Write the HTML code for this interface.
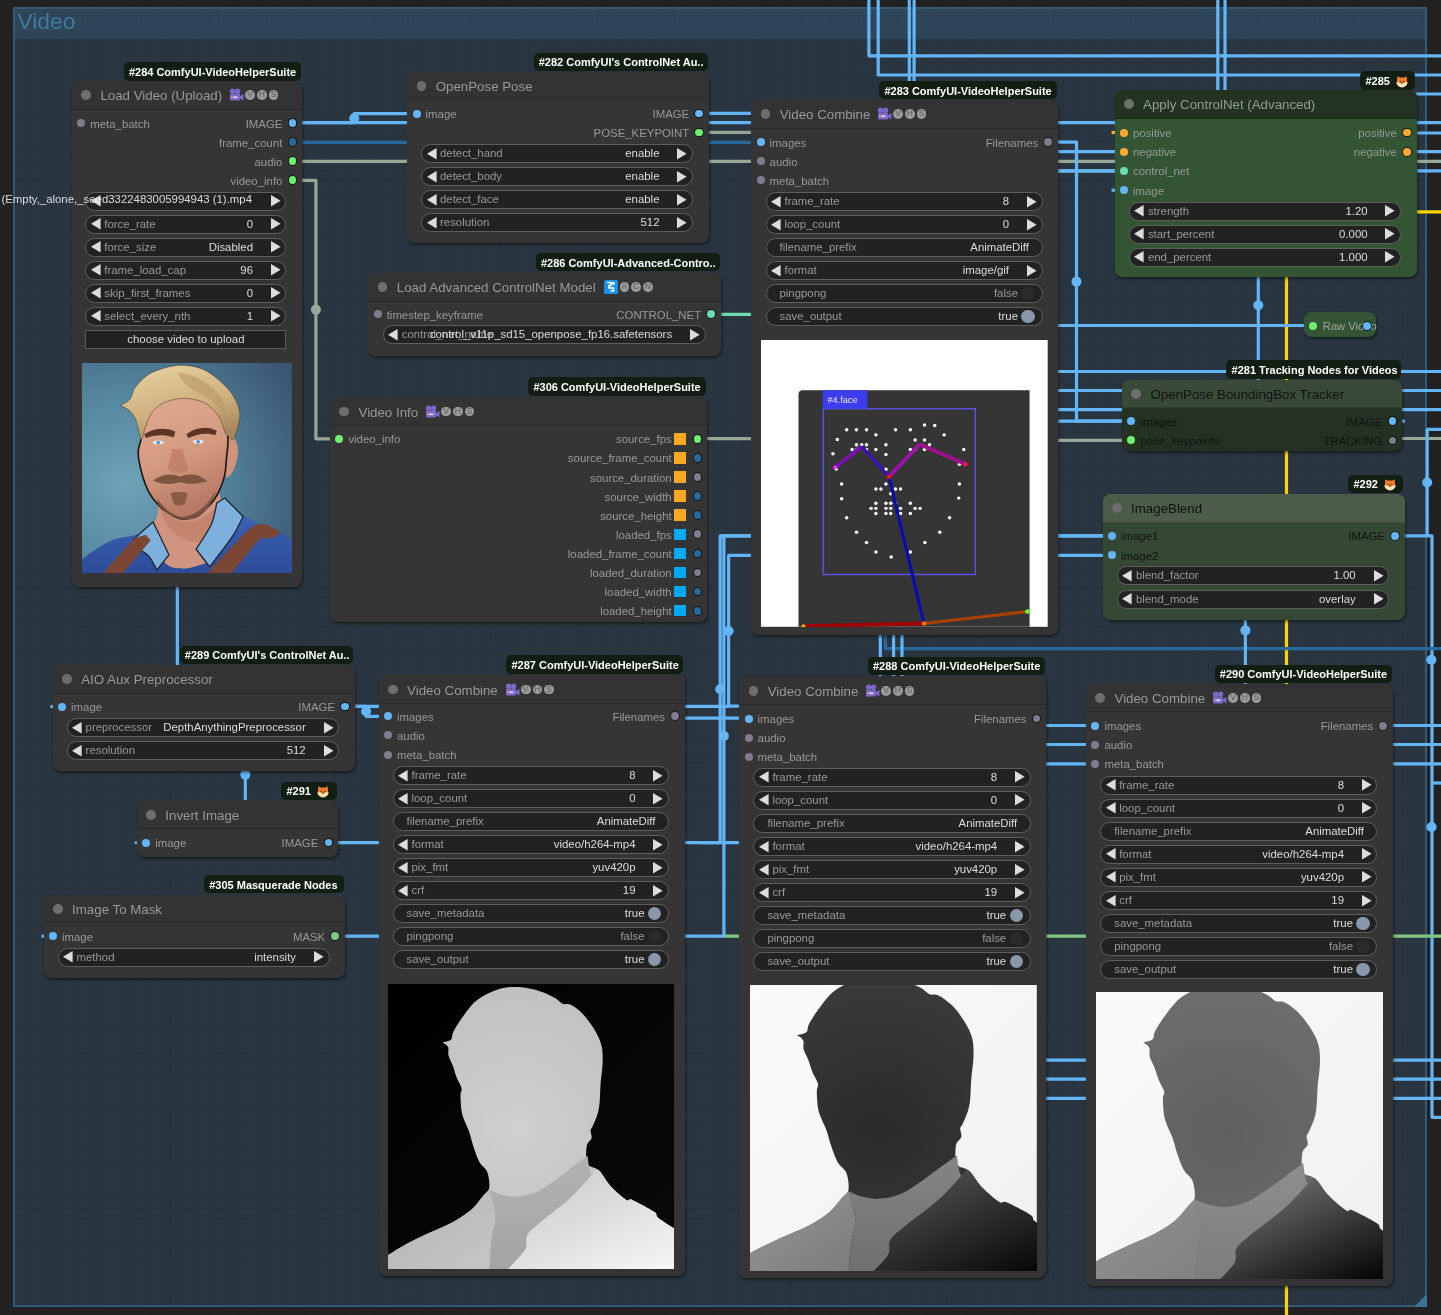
<!DOCTYPE html><html><head><meta charset="utf-8"><style>
*{margin:0;padding:0;box-sizing:border-box}
html,body{width:1441px;height:1315px;overflow:hidden;background:#222;font-family:"Liberation Sans",sans-serif}
#root{position:relative;width:1441px;height:1315px;overflow:hidden;background:#222;will-change:transform}
.r,.c,.t,.node,.w,.ic,.wires,.grp{position:absolute}
.t{white-space:pre}
.tc{text-align:center}
.c{border-radius:50%}
.node{border-radius:7.6px;box-shadow:1px 2px 3px rgba(0,0,0,0.45)}
.w{background:#222;border:1px solid #5e5e5e;box-sizing:content-box}
.ic{display:block;overflow:visible}
.wires{left:0;top:0}
.vh span{position:absolute;left:0;top:0;width:100%;height:100%;font-size:8.5px;line-height:9.8px;text-align:center;color:#5c5c5c;font-weight:normal}
</style></head><body><div id="root"><div class="grp" style="left:13px;top:7px;width:1413.5px;height:1299.5px;background:#293641;border:2px solid #335c7b;"></div>
<div class="grp" style="left:15px;top:9px;width:1409.5px;height:30.2px;background:#2f4659;"></div>
<div class="grp" style="left:0;top:0;width:1441px;height:1315px;background-image:linear-gradient(to right, rgba(0,0,0,0.05) 1px, transparent 1px),linear-gradient(to bottom, rgba(0,0,0,0.05) 1px, transparent 1px);background-size:9.71px 9.71px;background-position:4.8px 5.1px"></div>
<div class="t" style="left:17.50px;top:8.22px;font-size:22.8px;line-height:27.36px;color:#3f789e;font-weight:normal;">Video</div>
<svg class="ic" style="left:1414px;top:1294px" width="13" height="13"><path d="M13 0 L13 13 L0 13Z" fill="#3f789e" opacity="0.9"/></svg>
<svg class="wires" width="1441" height="1315" viewBox="0 0 1441 1315">
<path d="M292.00 122.70 L1441.00 122.70" stroke="#64b5f6" stroke-width="3.2" fill="none" stroke-linejoin="round"/>
<path d="M302.00 122.70 L354.25 122.70 L354.25 113.60 L416.00 113.60" stroke="#64b5f6" stroke-width="3.2" fill="none" stroke-linejoin="round"/>
<path d="M292.00 142.40 L1076.00 142.40" stroke="#29699c" stroke-width="3.2" fill="none" stroke-linejoin="round"/>
<path d="M292.00 161.40 L1441.00 161.40" stroke="#98a896" stroke-width="3.2" fill="none" stroke-linejoin="round"/>
<path d="M292.50 180.40 L315.90 180.40 L315.90 438.80 L339.20 438.80" stroke="#98a896" stroke-width="3.2" fill="none" stroke-linejoin="round"/>
<path d="M302.00 122.70 L177.35 122.70 L177.35 706.60 L62.20 706.60" stroke="#64b5f6" stroke-width="3.2" fill="none" stroke-linejoin="round"/>
<path d="M699.00 113.40 L915.00 113.40 L915.00 421.20 L1131.00 421.20" stroke="#64b5f6" stroke-width="3.2" fill="none" stroke-linejoin="round"/>
<path d="M699.00 132.40 L915.00 132.40 L915.00 440.40 L1131.00 440.40" stroke="#98a896" stroke-width="3.2" fill="none" stroke-linejoin="round"/>
<path d="M711.00 314.40 L917.00 314.40 L917.00 170.80 L1124.00 170.80" stroke="#6fdcae" stroke-width="3.2" fill="none" stroke-linejoin="round"/>
<path d="M697.00 438.60 L1000.00 438.60" stroke="#98a896" stroke-width="3.2" fill="none" stroke-linejoin="round"/>
<path d="M1392.50 421.20 L1076.50 421.20 L1076.50 142.00 L760.50 142.00" stroke="#64b5f6" stroke-width="3.2" fill="none" stroke-linejoin="round"/>
<path d="M1000.00 151.70 L1441.00 151.70" stroke="#64b5f6" stroke-width="3.2" fill="none" stroke-linejoin="round"/>
<path d="M1000.00 170.80 L1441.00 170.80" stroke="#64b5f6" stroke-width="3.2" fill="none" stroke-linejoin="round"/>
<path d="M1111.50 132.50 L1116.00 132.50" stroke="#ffa931" stroke-width="3.2" fill="none" stroke-linejoin="round"/>
<path d="M1111.50 190.20 L1116.00 190.20" stroke="#64b5f6" stroke-width="3.2" fill="none" stroke-linejoin="round"/>
<path d="M868.90 -5.00 L868.90 55.80 L1441.00 55.80" stroke="#64b5f6" stroke-width="3.2" fill="none" stroke-linejoin="round"/>
<path d="M878.20 -5.00 L878.20 75.00 L1441.00 75.00" stroke="#64b5f6" stroke-width="3.2" fill="none" stroke-linejoin="round"/>
<path d="M909.30 -5.00 L909.30 99.00" stroke="#64b5f6" stroke-width="3.2" fill="none" stroke-linejoin="round"/>
<path d="M914.10 -5.00 L914.10 99.00" stroke="#64b5f6" stroke-width="3.2" fill="none" stroke-linejoin="round"/>
<path d="M1217.80 -5.00 L1217.80 100.00" stroke="#64b5f6" stroke-width="3.2" fill="none" stroke-linejoin="round"/>
<path d="M1225.00 -5.00 L1225.00 100.00" stroke="#64b5f6" stroke-width="3.2" fill="none" stroke-linejoin="round"/>
<path d="M1300.00 94.00 L1441.00 94.00" stroke="#64b5f6" stroke-width="3.2" fill="none" stroke-linejoin="round"/>
<path d="M1300.00 133.00 L1441.00 133.00" stroke="#64b5f6" stroke-width="3.2" fill="none" stroke-linejoin="round"/>
<path d="M1445.00 211.90 L1286.50 211.90 L1286.50 1320.00" stroke="#ffd500" stroke-width="3.2" fill="none" stroke-linejoin="round"/>
<path d="M1258.30 250.00 L1258.30 400.00" stroke="#64b5f6" stroke-width="3.2" fill="none" stroke-linejoin="round"/>
<path d="M1000.00 325.50 L1310.00 325.50" stroke="#64b5f6" stroke-width="3.2" fill="none" stroke-linejoin="round"/>
<path d="M1000.00 371.50 L1441.00 371.50" stroke="#64b5f6" stroke-width="3.2" fill="none" stroke-linejoin="round"/>
<path d="M1000.00 390.50 L1441.00 390.50" stroke="#64b5f6" stroke-width="3.2" fill="none" stroke-linejoin="round"/>
<path d="M1000.00 409.60 L1441.00 409.60" stroke="#64b5f6" stroke-width="3.2" fill="none" stroke-linejoin="round"/>
<path d="M1390.00 438.50 L1441.00 438.50" stroke="#98a896" stroke-width="3.2" fill="none" stroke-linejoin="round"/>
<path d="M1395.20 535.90 L1432.00 535.90 L1432.00 1117.30 L1445.00 1117.30" stroke="#64b5f6" stroke-width="3.2" fill="none" stroke-linejoin="round"/>
<path d="M1427.20 535.90 L1427.20 429.40 L1445.00 429.40" stroke="#64b5f6" stroke-width="3.2" fill="none" stroke-linejoin="round"/>
<path d="M1431.40 783.00 L1445.00 783.00" stroke="#64b5f6" stroke-width="3.2" fill="none" stroke-linejoin="round"/>
<path d="M885.30 500.00 L885.30 648.60 L1445.00 648.60" stroke="#29699c" stroke-width="3.2" fill="none" stroke-linejoin="round"/>
<path d="M880.30 500.00 L880.30 690.00" stroke="#64b5f6" stroke-width="3.2" fill="none" stroke-linejoin="round"/>
<path d="M893.60 500.00 L893.60 690.00" stroke="#64b5f6" stroke-width="3.2" fill="none" stroke-linejoin="round"/>
<path d="M902.00 500.00 L902.00 690.00" stroke="#64b5f6" stroke-width="3.2" fill="none" stroke-linejoin="round"/>
<path d="M328.40 842.60 L720.20 842.60 L720.20 535.90 L1112.00 535.90" stroke="#64b5f6" stroke-width="3.2" fill="none" stroke-linejoin="round"/>
<path d="M700.00 842.60 L760.00 842.60" stroke="#64b5f6" stroke-width="3.2" fill="none" stroke-linejoin="round"/>
<path d="M335.90 936.20 L723.90 936.20 L723.90 535.90 L1112.00 535.90" stroke="#64b5f6" stroke-width="3.2" fill="none" stroke-linejoin="round"/>
<path d="M723.90 936.20 L1445.00 936.20" stroke="#81c784" stroke-width="3.2" fill="none" stroke-linejoin="round"/>
<path d="M345.00 706.40 L728.60 706.40 L728.60 555.30 L1112.00 555.30" stroke="#64b5f6" stroke-width="3.2" fill="none" stroke-linejoin="round"/>
<path d="M355.00 706.40 L366.10 706.40 L366.10 716.30 L387.20 716.30" stroke="#64b5f6" stroke-width="3.2" fill="none" stroke-linejoin="round"/>
<path d="M728.00 706.20 L900.00 706.20" stroke="#64b5f6" stroke-width="3.2" fill="none" stroke-linejoin="round"/>
<path d="M546.00 718.20 L748.50 718.20" stroke="#64b5f6" stroke-width="3.2" fill="none" stroke-linejoin="round"/>
<path d="M1000.00 725.50 L1445.00 725.50" stroke="#64b5f6" stroke-width="3.2" fill="none" stroke-linejoin="round"/>
<path d="M1000.00 744.50 L1445.00 744.50" stroke="#64b5f6" stroke-width="3.2" fill="none" stroke-linejoin="round"/>
<path d="M1000.00 763.80 L1445.00 763.80" stroke="#64b5f6" stroke-width="3.2" fill="none" stroke-linejoin="round"/>
<path d="M1000.00 1060.20 L1445.00 1060.20" stroke="#64b5f6" stroke-width="3.2" fill="none" stroke-linejoin="round"/>
<path d="M1000.00 1079.20 L1445.00 1079.20" stroke="#64b5f6" stroke-width="3.2" fill="none" stroke-linejoin="round"/>
<path d="M1000.00 1098.40 L1445.00 1098.40" stroke="#64b5f6" stroke-width="3.2" fill="none" stroke-linejoin="round"/>
<path d="M1245.40 600.00 L1245.40 700.00" stroke="#64b5f6" stroke-width="3.2" fill="none" stroke-linejoin="round"/>
<path d="M245.35 706.60 L245.35 842.60 L136.00 842.60 L145.70 842.60" stroke="#64b5f6" stroke-width="3.2" fill="none" stroke-linejoin="round"/>
<path d="M41.50 936.20 L52.70 936.20" stroke="#64b5f6" stroke-width="3.2" fill="none" stroke-linejoin="round"/>
<path d="M1397.00 421.20 L1405.00 421.20" stroke="#64b5f6" stroke-width="3.2" fill="none" stroke-linejoin="round"/>
<path d="M50.50 706.60 L60.00 706.60" stroke="#64b5f6" stroke-width="3.2" fill="none" stroke-linejoin="round"/>
<circle cx="354.25" cy="118.2" r="5" fill="#64b5f6"/>
<circle cx="315.9" cy="309.6" r="5" fill="#98a896"/>
<circle cx="1076.5" cy="281.6" r="5" fill="#64b5f6"/>
<circle cx="1258.3" cy="305.3" r="5" fill="#64b5f6"/>
<circle cx="1427.2" cy="482.5" r="5" fill="#64b5f6"/>
<circle cx="1431.4" cy="659.7" r="5" fill="#64b5f6"/>
<circle cx="1431.6" cy="827" r="5" fill="#64b5f6"/>
<circle cx="720.2" cy="689.2" r="5" fill="#64b5f6"/>
<circle cx="723.9" cy="736" r="5" fill="#64b5f6"/>
<circle cx="728.6" cy="631" r="5" fill="#64b5f6"/>
<circle cx="366.1" cy="711.4" r="5" fill="#64b5f6"/>
<circle cx="1245.4" cy="630.4" r="5" fill="#64b5f6"/>
<circle cx="245.35" cy="774.6" r="5" fill="#64b5f6"/>
</svg>
<div class="node" style="left:71.90px;top:81.00px;width:230.30px;height:506.00px;background:#353535;"></div><div class="r" style="left:71.90px;top:81.00px;width:230.30px;height:28.50px;background:#333333;border-radius:7.6px 7.6px 0 0;border-bottom:1px solid rgba(0,0,0,0.18)"></div><div class="c" style="left:81.30px;top:90.35px;width:9.80px;height:9.80px;background:#6e6e6e;"></div><div class="t" style="left:100.40px;top:88.46px;font-size:13.3px;line-height:15.96px;color:#999;font-weight:normal;">Load Video (Upload)</div><svg class="ic" style="left:229.00px;top:88.25px" width="15" height="14" viewBox="0 0 15 14"><circle cx="3.5" cy="3.2" r="2.6" fill="#7b68c8"/><circle cx="8.6" cy="3.2" r="2.6" fill="#7b68c8"/><rect x="1" y="5.6" width="10" height="7" rx="1" fill="#7b68c8"/><path d="M11 8 L14.5 6 L14.5 12.5 L11 10.5Z" fill="#7b68c8"/><rect x="2.5" y="8.5" width="6" height="1.6" fill="#e8e0f0"/><rect x="3.2" y="8.5" width="1" height="1.6" fill="#d44"/></svg><div class="c vh" style="left:245.30px;top:90.35px;width:9.8px;height:9.8px;background:#9c9c9c;"><span>V</span></div><div class="c vh" style="left:257.00px;top:90.35px;width:9.8px;height:9.8px;background:#9c9c9c;"><span>H</span></div><div class="c vh" style="left:268.70px;top:90.35px;width:9.8px;height:9.8px;background:#9c9c9c;"><span>S</span></div><div class="c" style="left:77.30px;top:119.00px;width:8.00px;height:8.00px;background:#7f7c8f;"></div><div class="t" style="left:90.30px;top:117.51px;font-size:11.4px;line-height:13.68px;color:#999;font-weight:normal;">meta_batch</div><div class="c" style="left:288.60px;top:119.10px;width:7.80px;height:7.80px;background:#64b5f6;box-shadow:0 0 0 1px rgba(0,0,0,0.6);"></div><div class="t" style="right:1158.60px;top:117.51px;font-size:11.4px;line-height:13.68px;color:#999;font-weight:normal;">IMAGE</div><div class="c" style="left:288.60px;top:138.20px;width:7.80px;height:7.80px;background:#29699c;box-shadow:0 0 0 1px rgba(0,0,0,0.6);"></div><div class="t" style="right:1158.60px;top:136.61px;font-size:11.4px;line-height:13.68px;color:#999;font-weight:normal;">frame_count</div><div class="c" style="left:288.60px;top:157.30px;width:7.80px;height:7.80px;background:#6ef06e;box-shadow:0 0 0 1px rgba(0,0,0,0.6);"></div><div class="t" style="right:1158.60px;top:155.71px;font-size:11.4px;line-height:13.68px;color:#999;font-weight:normal;">audio</div><div class="c" style="left:288.60px;top:176.40px;width:7.80px;height:7.80px;background:#6ef06e;box-shadow:0 0 0 1px rgba(0,0,0,0.6);"></div><div class="t" style="right:1158.60px;top:174.81px;font-size:11.4px;line-height:13.68px;color:#999;font-weight:normal;">video_info</div><div class="w" style="left:85.30px;top:191.50px;width:199.20px;height:17.00px;border-radius:9.50px"></div><svg class="ic" style="left:90.80px;top:195.30px" width="10" height="11.4"><path d="M0 5.7 L9.6 0 L9.6 11.4Z" fill="#ddd"/></svg><svg class="ic" style="left:270.80px;top:195.30px" width="10" height="11.4"><path d="M9.6 5.7 L0 0 L0 11.4Z" fill="#ddd"/></svg><div class="t" style="left:104.30px;top:194.51px;font-size:11.4px;line-height:13.68px;color:#999;font-weight:normal;"></div><div class="t" style="right:1188.00px;top:194.51px;font-size:11.4px;line-height:13.68px;color:#ddd;font-weight:normal;"></div><div class="w" style="left:85.30px;top:214.50px;width:199.20px;height:17.00px;border-radius:9.50px"></div><svg class="ic" style="left:90.80px;top:218.30px" width="10" height="11.4"><path d="M0 5.7 L9.6 0 L9.6 11.4Z" fill="#ddd"/></svg><svg class="ic" style="left:270.80px;top:218.30px" width="10" height="11.4"><path d="M9.6 5.7 L0 0 L0 11.4Z" fill="#ddd"/></svg><div class="t" style="left:104.30px;top:217.51px;font-size:11.4px;line-height:13.68px;color:#999;font-weight:normal;">force_rate</div><div class="t" style="right:1188.00px;top:217.51px;font-size:11.4px;line-height:13.68px;color:#ddd;font-weight:normal;">0</div><div class="w" style="left:85.30px;top:237.50px;width:199.20px;height:17.00px;border-radius:9.50px"></div><svg class="ic" style="left:90.80px;top:241.30px" width="10" height="11.4"><path d="M0 5.7 L9.6 0 L9.6 11.4Z" fill="#ddd"/></svg><svg class="ic" style="left:270.80px;top:241.30px" width="10" height="11.4"><path d="M9.6 5.7 L0 0 L0 11.4Z" fill="#ddd"/></svg><div class="t" style="left:104.30px;top:240.51px;font-size:11.4px;line-height:13.68px;color:#999;font-weight:normal;">force_size</div><div class="t" style="right:1188.00px;top:240.51px;font-size:11.4px;line-height:13.68px;color:#ddd;font-weight:normal;">Disabled</div><div class="w" style="left:85.30px;top:260.50px;width:199.20px;height:17.00px;border-radius:9.50px"></div><svg class="ic" style="left:90.80px;top:264.30px" width="10" height="11.4"><path d="M0 5.7 L9.6 0 L9.6 11.4Z" fill="#ddd"/></svg><svg class="ic" style="left:270.80px;top:264.30px" width="10" height="11.4"><path d="M9.6 5.7 L0 0 L0 11.4Z" fill="#ddd"/></svg><div class="t" style="left:104.30px;top:263.51px;font-size:11.4px;line-height:13.68px;color:#999;font-weight:normal;">frame_load_cap</div><div class="t" style="right:1188.00px;top:263.51px;font-size:11.4px;line-height:13.68px;color:#ddd;font-weight:normal;">96</div><div class="w" style="left:85.30px;top:283.50px;width:199.20px;height:17.00px;border-radius:9.50px"></div><svg class="ic" style="left:90.80px;top:287.30px" width="10" height="11.4"><path d="M0 5.7 L9.6 0 L9.6 11.4Z" fill="#ddd"/></svg><svg class="ic" style="left:270.80px;top:287.30px" width="10" height="11.4"><path d="M9.6 5.7 L0 0 L0 11.4Z" fill="#ddd"/></svg><div class="t" style="left:104.30px;top:286.51px;font-size:11.4px;line-height:13.68px;color:#999;font-weight:normal;">skip_first_frames</div><div class="t" style="right:1188.00px;top:286.51px;font-size:11.4px;line-height:13.68px;color:#ddd;font-weight:normal;">0</div><div class="w" style="left:85.30px;top:306.50px;width:199.20px;height:17.00px;border-radius:9.50px"></div><svg class="ic" style="left:90.80px;top:310.30px" width="10" height="11.4"><path d="M0 5.7 L9.6 0 L9.6 11.4Z" fill="#ddd"/></svg><svg class="ic" style="left:270.80px;top:310.30px" width="10" height="11.4"><path d="M9.6 5.7 L0 0 L0 11.4Z" fill="#ddd"/></svg><div class="t" style="left:104.30px;top:309.51px;font-size:11.4px;line-height:13.68px;color:#999;font-weight:normal;">select_every_nth</div><div class="t" style="right:1188.00px;top:309.51px;font-size:11.4px;line-height:13.68px;color:#ddd;font-weight:normal;">1</div><div class="w" style="left:85.30px;top:329.50px;width:199.20px;height:17.00px;border-radius:0"></div><div class="t tc" style="left:-114.10px;width:600px;top:332.51px;font-size:11.4px;line-height:13.68px;color:#ddd;font-weight:normal;">choose video to upload</div><svg class="ic" style="overflow:hidden;left:82.20px;top:363.00px" width="209.80" height="210.20" viewBox="0 0 1315 1315" preserveAspectRatio="none"><defs>
<radialGradient id="pbg" cx="0.2" cy="0.58" r="0.95"><stop offset="0" stop-color="#6fa3b8"/><stop offset="0.45" stop-color="#5586a0"/><stop offset="1" stop-color="#3a5572"/></radialGradient>
<linearGradient id="phair" x1="0.2" y1="0" x2="0.6" y2="1"><stop offset="0" stop-color="#e6d0a0"/><stop offset="0.6" stop-color="#cfb07e"/><stop offset="1" stop-color="#a8885a"/></linearGradient>
<linearGradient id="pskin" x1="0" y1="0" x2="0.3" y2="1"><stop offset="0" stop-color="#e1ad95"/><stop offset="0.6" stop-color="#d49a80"/><stop offset="1" stop-color="#b87a66"/></linearGradient>
<linearGradient id="pshirt" x1="0" y1="0" x2="0" y2="1"><stop offset="0" stop-color="#3b62b4"/><stop offset="1" stop-color="#2c4b98"/></linearGradient>
</defs>
<rect width="1315" height="1315" fill="url(#pbg)"/>
<path d="M0.0 1315.0 C0.0 1300.8 0.0 1244.2 0.0 1230.0 C13.3 1220.0 46.7 1190.8 80.0 1170.0 C113.3 1149.2 158.3 1120.3 200.0 1105.0 C241.7 1089.7 296.7 1087.2 330.0 1078.0 C363.3 1068.8 388.3 1054.7 400.0 1050.0 C420.0 1083.3 480.0 1210.8 520.0 1250.0 C560.0 1289.2 598.3 1284.2 640.0 1285.0 C681.7 1285.8 748.3 1260.0 770.0 1255.0 C786.7 1222.5 847.5 1106.7 870.0 1060.0 C892.5 1013.3 899.2 989.2 905.0 975.0 C920.8 971.7 967.5 950.8 1000.0 955.0 C1032.5 959.2 1061.7 984.2 1100.0 1000.0 C1138.3 1015.8 1194.2 1030.8 1230.0 1050.0 C1265.8 1069.2 1300.8 1104.2 1315.0 1115.0 C1315.0 1148.3 1315.0 1281.7 1315.0 1315.0 C1095.8 1315.0 219.2 1315.0 0.0 1315.0Z" fill="url(#pshirt)"/>
<path d="M480.0 870.0 C478.3 885.0 476.7 936.7 470.0 960.0 C463.3 983.3 452.5 995.0 440.0 1010.0 C427.5 1025.0 402.5 1043.3 395.0 1050.0 C415.8 1083.3 479.2 1210.8 520.0 1250.0 C560.8 1289.2 598.3 1284.2 640.0 1285.0 C681.7 1285.8 748.3 1260.0 770.0 1255.0 C786.7 1222.5 847.5 1106.7 870.0 1060.0 C892.5 1013.3 899.2 989.2 905.0 975.0 C900.8 959.2 887.5 906.7 880.0 880.0 C872.5 853.3 863.3 825.8 860.0 815.0 C850.0 827.5 826.7 865.8 800.0 890.0 C773.3 914.2 733.3 945.8 700.0 960.0 C666.7 974.2 636.7 990.0 600.0 975.0 C563.3 960.0 500.0 887.5 480.0 870.0Z" fill="#d09580"/>
<path d="M480 880 C520 960 600 1000 700 990 C780 970 850 900 880 860 L905 975 C850 1050 780 1120 700 1120 C600 1100 520 1040 480 880Z" fill="#b9775f" opacity="0.55"/>
<path d="M320.0 1105.0 C340.8 1086.7 424.2 1013.3 445.0 995.0 C450.8 1006.7 463.3 1030.8 480.0 1065.0 C496.7 1099.2 534.2 1177.5 545.0 1200.0 C532.5 1215.8 482.5 1279.2 470.0 1295.0 C461.7 1280.8 438.3 1231.7 420.0 1210.0 C401.7 1188.3 370.0 1172.5 360.0 1165.0 C353.3 1155.0 326.7 1115.0 320.0 1105.0Z" fill="#7db0dc" stroke="#1c2230" stroke-width="8"/>
<path d="M845.0 875.0 C853.3 870.0 886.7 850.0 895.0 845.0 C914.2 864.2 990.8 940.8 1010.0 960.0 C998.3 981.7 975.0 1037.5 940.0 1090.0 C905.0 1142.5 823.3 1244.2 800.0 1275.0 C785.8 1256.7 729.2 1183.3 715.0 1165.0 C730.8 1139.2 788.3 1058.3 810.0 1010.0 C831.7 961.7 839.2 897.5 845.0 875.0Z" fill="#7db0dc" stroke="#1c2230" stroke-width="8"/>
<path d="M130 1315 L330 1095 L400 1075 L430 1110 L255 1315Z" fill="#7b4734"/>
<path d="M785 1315 L1010 1075 L1090 1008 L1165 1012 L1245 1060 L1205 1092 L1115 1100 L935 1315Z" fill="#7b4734"/>
<path d="M895.0 470.0 C904.2 433.0 936.2 456.3 950.0 468.0 C963.8 479.7 976.0 511.3 978.0 540.0 C980.0 568.7 970.8 612.5 962.0 640.0 C953.2 667.5 936.2 696.7 925.0 705.0 C913.8 713.3 900.0 729.2 895.0 690.0 C890.0 650.8 885.8 507.0 895.0 470.0Z" fill="#cf957c"/>
<path d="M372.0 470.0 C368.2 496.7 351.5 523.3 352.0 560.0 C352.5 596.7 363.7 648.3 375.0 690.0 C386.3 731.7 402.5 776.7 420.0 810.0 C437.5 843.3 456.7 866.7 480.0 890.0 C503.3 913.3 535.8 935.8 560.0 950.0 C584.2 964.2 600.8 973.3 625.0 975.0 C649.2 976.7 675.8 974.2 705.0 960.0 C734.2 945.8 774.2 916.7 800.0 890.0 C825.8 863.3 844.2 831.7 860.0 800.0 C875.8 768.3 887.5 733.3 895.0 700.0 C902.5 666.7 901.7 636.7 905.0 600.0 C908.3 563.3 915.8 520.0 915.0 480.0 C914.2 440.0 912.5 398.3 900.0 360.0 C887.5 321.7 863.3 278.3 840.0 250.0 C816.7 221.7 790.0 203.3 760.0 190.0 C730.0 176.7 693.3 171.7 660.0 170.0 C626.7 168.3 591.7 171.7 560.0 180.0 C528.3 188.3 496.7 200.0 470.0 220.0 C443.3 240.0 415.8 270.0 400.0 300.0 C384.2 330.0 379.7 371.7 375.0 400.0 C370.3 428.3 375.8 443.3 372.0 470.0Z" fill="url(#pskin)" stroke="#1e1410" stroke-width="10"/>
<path d="M470 850 C540 940 600 968 640 962 C720 948 790 890 840 800 C820 880 760 960 700 975 C640 990 560 975 480 890Z" fill="#7a5040"/>
<path d="M240.0 265.0 C250.0 258.8 284.2 247.2 300.0 228.0 C315.8 208.8 315.0 176.3 335.0 150.0 C355.0 123.7 385.8 90.8 420.0 70.0 C454.2 49.2 501.7 34.2 540.0 25.0 C578.3 15.8 613.3 12.5 650.0 15.0 C686.7 17.5 726.7 25.8 760.0 40.0 C793.3 54.2 821.7 76.7 850.0 100.0 C878.3 123.3 909.2 153.3 930.0 180.0 C950.8 206.7 965.0 235.0 975.0 260.0 C985.0 285.0 989.5 306.7 990.0 330.0 C990.5 353.3 982.7 380.0 978.0 400.0 C973.3 420.0 967.5 436.7 962.0 450.0 C956.5 463.3 950.3 476.7 945.0 480.0 C939.7 483.3 937.5 476.7 930.0 470.0 C922.5 463.3 907.5 451.7 900.0 440.0 C892.5 428.3 891.7 416.7 885.0 400.0 C878.3 383.3 871.7 359.2 860.0 340.0 C848.3 320.8 831.7 300.8 815.0 285.0 C798.3 269.2 785.8 255.5 760.0 245.0 C734.2 234.5 693.3 224.2 660.0 222.0 C626.7 219.8 590.0 224.3 560.0 232.0 C530.0 239.7 501.7 252.5 480.0 268.0 C458.3 283.5 444.2 301.3 430.0 325.0 C415.8 348.7 404.7 384.2 395.0 410.0 C385.3 435.8 378.7 478.3 372.0 480.0 C365.3 481.7 361.2 441.7 355.0 420.0 C348.8 398.3 344.2 370.0 335.0 350.0 C325.8 330.0 315.8 314.2 300.0 300.0 C284.2 285.8 250.0 270.8 240.0 265.0Z" fill="url(#phair)" stroke="#2a2418" stroke-width="5" stroke-opacity="0.55"/>
<path d="M600 60 C700 70 820 130 880 230 C900 280 920 350 935 420 C910 330 850 250 760 200 C700 170 640 150 600 60Z" fill="#b89868" opacity="0.6"/>
<path d="M390 445 C460 400 540 405 585 430 L575 465 C510 445 450 450 400 470Z" fill="#5e3424"/>
<path d="M655 445 C720 395 800 395 845 425 L835 452 C780 432 720 445 665 470Z" fill="#5e3424"/>
<ellipse cx="478" cy="497" rx="34" ry="12" fill="#e8e8e8"/><circle cx="478" cy="497" r="11" fill="#3d8fe0"/>
<ellipse cx="728" cy="492" rx="34" ry="12" fill="#e8e8e8"/><circle cx="728" cy="492" r="11" fill="#3d8fe0"/>
<path d="M565 540 C560 600 530 640 545 670 C580 700 640 695 665 665 C655 620 635 580 630 540Z" fill="#b97a62" opacity="0.7"/>
<path d="M445 735 C510 690 570 690 615 712 C665 690 730 690 785 740 C730 755 670 765 615 745 C560 765 500 760 445 735Z" fill="#7d5440"/>
<path d="M555 815 C580 805 640 805 662 815 L645 880 C630 895 590 895 575 880Z" fill="#8a5c46"/>
</svg><div class="r" style="left:123.70px;top:62.00px;width:177.10px;height:18.50px;background:#111e11;border-radius:5px;"></div><div class="t" style="left:128.90px;top:65.64px;font-size:11.0px;line-height:13.20px;color:#fff;font-weight:bold;">#284 ComfyUI-VideoHelperSuite</div>
<div class="node" style="left:407.20px;top:71.90px;width:301.80px;height:171.60px;background:#353535;"></div><div class="r" style="left:407.20px;top:71.90px;width:301.80px;height:28.50px;background:#333333;border-radius:7.6px 7.6px 0 0;border-bottom:1px solid rgba(0,0,0,0.18)"></div><div class="c" style="left:416.60px;top:81.25px;width:9.80px;height:9.80px;background:#6e6e6e;"></div><div class="t" style="left:435.70px;top:79.36px;font-size:13.3px;line-height:15.96px;color:#999;font-weight:normal;">OpenPose Pose</div><div class="c" style="left:412.60px;top:109.60px;width:8.00px;height:8.00px;background:#64b5f6;"></div><div class="t" style="left:425.60px;top:108.11px;font-size:11.4px;line-height:13.68px;color:#999;font-weight:normal;">image</div><div class="c" style="left:695.40px;top:109.70px;width:7.80px;height:7.80px;background:#64b5f6;box-shadow:0 0 0 1px rgba(0,0,0,0.6);"></div><div class="t" style="right:751.80px;top:108.11px;font-size:11.4px;line-height:13.68px;color:#999;font-weight:normal;">IMAGE</div><div class="c" style="left:695.40px;top:128.50px;width:7.80px;height:7.80px;background:#6ef06e;box-shadow:0 0 0 1px rgba(0,0,0,0.6);"></div><div class="t" style="right:751.80px;top:126.91px;font-size:11.4px;line-height:13.68px;color:#999;font-weight:normal;">POSE_KEYPOINT</div><div class="w" style="left:421.00px;top:144.00px;width:270.00px;height:17.00px;border-radius:9.50px"></div><svg class="ic" style="left:426.50px;top:147.80px" width="10" height="11.4"><path d="M0 5.7 L9.6 0 L9.6 11.4Z" fill="#ddd"/></svg><svg class="ic" style="left:677.30px;top:147.80px" width="10" height="11.4"><path d="M9.6 5.7 L0 0 L0 11.4Z" fill="#ddd"/></svg><div class="t" style="left:440.00px;top:147.01px;font-size:11.4px;line-height:13.68px;color:#999;font-weight:normal;">detect_hand</div><div class="t" style="right:781.50px;top:147.01px;font-size:11.4px;line-height:13.68px;color:#ddd;font-weight:normal;">enable</div><div class="w" style="left:421.00px;top:167.00px;width:270.00px;height:17.00px;border-radius:9.50px"></div><svg class="ic" style="left:426.50px;top:170.80px" width="10" height="11.4"><path d="M0 5.7 L9.6 0 L9.6 11.4Z" fill="#ddd"/></svg><svg class="ic" style="left:677.30px;top:170.80px" width="10" height="11.4"><path d="M9.6 5.7 L0 0 L0 11.4Z" fill="#ddd"/></svg><div class="t" style="left:440.00px;top:170.01px;font-size:11.4px;line-height:13.68px;color:#999;font-weight:normal;">detect_body</div><div class="t" style="right:781.50px;top:170.01px;font-size:11.4px;line-height:13.68px;color:#ddd;font-weight:normal;">enable</div><div class="w" style="left:421.00px;top:190.00px;width:270.00px;height:17.00px;border-radius:9.50px"></div><svg class="ic" style="left:426.50px;top:193.80px" width="10" height="11.4"><path d="M0 5.7 L9.6 0 L9.6 11.4Z" fill="#ddd"/></svg><svg class="ic" style="left:677.30px;top:193.80px" width="10" height="11.4"><path d="M9.6 5.7 L0 0 L0 11.4Z" fill="#ddd"/></svg><div class="t" style="left:440.00px;top:193.01px;font-size:11.4px;line-height:13.68px;color:#999;font-weight:normal;">detect_face</div><div class="t" style="right:781.50px;top:193.01px;font-size:11.4px;line-height:13.68px;color:#ddd;font-weight:normal;">enable</div><div class="w" style="left:421.00px;top:213.00px;width:270.00px;height:17.00px;border-radius:9.50px"></div><svg class="ic" style="left:426.50px;top:216.80px" width="10" height="11.4"><path d="M0 5.7 L9.6 0 L9.6 11.4Z" fill="#ddd"/></svg><svg class="ic" style="left:677.30px;top:216.80px" width="10" height="11.4"><path d="M9.6 5.7 L0 0 L0 11.4Z" fill="#ddd"/></svg><div class="t" style="left:440.00px;top:216.01px;font-size:11.4px;line-height:13.68px;color:#999;font-weight:normal;">resolution</div><div class="t" style="right:781.50px;top:216.01px;font-size:11.4px;line-height:13.68px;color:#ddd;font-weight:normal;">512</div><div class="r" style="left:533.50px;top:52.50px;width:174.00px;height:18.00px;background:#111e11;border-radius:5px;"></div><div class="t" style="left:538.70px;top:55.89px;font-size:11.0px;line-height:13.20px;color:#fff;font-weight:bold;">#282 ComfyUI&#x27;s ControlNet Au..</div>
<div class="node" style="left:368.30px;top:273.00px;width:352.60px;height:82.90px;background:#353535;"></div><div class="r" style="left:368.30px;top:273.00px;width:352.60px;height:28.50px;background:#333333;border-radius:7.6px 7.6px 0 0;border-bottom:1px solid rgba(0,0,0,0.18)"></div><div class="c" style="left:377.70px;top:282.35px;width:9.80px;height:9.80px;background:#6e6e6e;"></div><div class="t" style="left:396.80px;top:280.46px;font-size:13.3px;line-height:15.96px;color:#999;font-weight:normal;">Load Advanced ControlNet Model</div><svg class="ic" style="left:603.50px;top:280.25px" width="14" height="14" viewBox="0 0 14 14"><rect x="0" y="0" width="14" height="14" rx="1.5" fill="#1a8fe6"/><path d="M3 2.5h4v3H5v2.5h4.5v3H6.5" stroke="#fff" stroke-width="1.6" fill="none"/><circle cx="9.5" cy="3.5" r="1.4" fill="#fff"/></svg><div class="c vh" style="left:619.50px;top:282.35px;width:9.8px;height:9.8px;background:#9c9c9c;"><span>A</span></div><div class="c vh" style="left:631.20px;top:282.35px;width:9.8px;height:9.8px;background:#9c9c9c;"><span>C</span></div><div class="c vh" style="left:642.90px;top:282.35px;width:9.8px;height:9.8px;background:#9c9c9c;"><span>N</span></div><div class="c" style="left:373.70px;top:310.30px;width:8.00px;height:8.00px;background:#7f7c8f;"></div><div class="t" style="left:386.70px;top:308.81px;font-size:11.4px;line-height:13.68px;color:#999;font-weight:normal;">timestep_keyframe</div><div class="c" style="left:707.30px;top:310.40px;width:7.80px;height:7.80px;background:#6fdcae;box-shadow:0 0 0 1px rgba(0,0,0,0.6);"></div><div class="t" style="right:739.90px;top:308.81px;font-size:11.4px;line-height:13.68px;color:#999;font-weight:normal;">CONTROL_NET</div><div class="w" style="left:382.80px;top:325.40px;width:320.80px;height:17.00px;border-radius:9.50px"></div><svg class="ic" style="left:388.30px;top:329.20px" width="10" height="11.4"><path d="M0 5.7 L9.6 0 L9.6 11.4Z" fill="#ddd"/></svg><svg class="ic" style="left:689.90px;top:329.20px" width="10" height="11.4"><path d="M9.6 5.7 L0 0 L0 11.4Z" fill="#ddd"/></svg><div class="t" style="left:401.80px;top:328.41px;font-size:11.4px;line-height:13.68px;color:#999;font-weight:normal;">control_net_name</div><div class="t" style="right:768.90px;top:328.41px;font-size:11.4px;line-height:13.68px;color:#ddd;font-weight:normal;">control_v11p_sd15_openpose_fp16.safetensors</div><div class="r" style="left:535.70px;top:253.20px;width:184.30px;height:18.00px;background:#111e11;border-radius:5px;"></div><div class="t" style="left:540.90px;top:256.59px;font-size:11.0px;line-height:13.20px;color:#fff;font-weight:bold;">#286 ComfyUI-Advanced-Contro..</div>
<div class="node" style="left:330.00px;top:397.30px;width:377.20px;height:224.40px;background:#353535;"></div><div class="r" style="left:330.00px;top:397.30px;width:377.20px;height:28.50px;background:#333333;border-radius:7.6px 7.6px 0 0;border-bottom:1px solid rgba(0,0,0,0.18)"></div><div class="c" style="left:339.40px;top:406.65px;width:9.80px;height:9.80px;background:#6e6e6e;"></div><div class="t" style="left:358.50px;top:404.76px;font-size:13.3px;line-height:15.96px;color:#999;font-weight:normal;">Video Info</div><svg class="ic" style="left:425.00px;top:404.55px" width="15" height="14" viewBox="0 0 15 14"><circle cx="3.5" cy="3.2" r="2.6" fill="#7b68c8"/><circle cx="8.6" cy="3.2" r="2.6" fill="#7b68c8"/><rect x="1" y="5.6" width="10" height="7" rx="1" fill="#7b68c8"/><path d="M11 8 L14.5 6 L14.5 12.5 L11 10.5Z" fill="#7b68c8"/><rect x="2.5" y="8.5" width="6" height="1.6" fill="#e8e0f0"/><rect x="3.2" y="8.5" width="1" height="1.6" fill="#d44"/></svg><div class="c vh" style="left:441.30px;top:406.65px;width:9.8px;height:9.8px;background:#9c9c9c;"><span>V</span></div><div class="c vh" style="left:453.00px;top:406.65px;width:9.8px;height:9.8px;background:#9c9c9c;"><span>H</span></div><div class="c vh" style="left:464.70px;top:406.65px;width:9.8px;height:9.8px;background:#9c9c9c;"><span>S</span></div><div class="c" style="left:335.40px;top:434.80px;width:8.00px;height:8.00px;background:#6ef06e;"></div><div class="t" style="left:348.40px;top:433.31px;font-size:11.4px;line-height:13.68px;color:#999;font-weight:normal;">video_info</div><div class="c" style="left:693.60px;top:434.90px;width:7.80px;height:7.80px;background:#6ef06e;box-shadow:0 0 0 1px rgba(0,0,0,0.6);"></div><div class="r" style="left:674.20px;top:433.00px;width:11.60px;height:11.60px;background:#f9a825;border-radius:0px;"></div><div class="t" style="right:769.30px;top:433.31px;font-size:11.4px;line-height:13.68px;color:#999;font-weight:normal;">source_fps</div><div class="c" style="left:693.60px;top:454.00px;width:7.80px;height:7.80px;background:#29699c;box-shadow:0 0 0 1px rgba(0,0,0,0.6);"></div><div class="r" style="left:674.20px;top:452.10px;width:11.60px;height:11.60px;background:#f9a825;border-radius:0px;"></div><div class="t" style="right:769.30px;top:452.41px;font-size:11.4px;line-height:13.68px;color:#999;font-weight:normal;">source_frame_count</div><div class="c" style="left:693.60px;top:473.10px;width:7.80px;height:7.80px;background:#7f7c8f;box-shadow:0 0 0 1px rgba(0,0,0,0.6);"></div><div class="r" style="left:674.20px;top:471.20px;width:11.60px;height:11.60px;background:#f9a825;border-radius:0px;"></div><div class="t" style="right:769.30px;top:471.51px;font-size:11.4px;line-height:13.68px;color:#999;font-weight:normal;">source_duration</div><div class="c" style="left:693.60px;top:492.20px;width:7.80px;height:7.80px;background:#29699c;box-shadow:0 0 0 1px rgba(0,0,0,0.6);"></div><div class="r" style="left:674.20px;top:490.30px;width:11.60px;height:11.60px;background:#f9a825;border-radius:0px;"></div><div class="t" style="right:769.30px;top:490.61px;font-size:11.4px;line-height:13.68px;color:#999;font-weight:normal;">source_width</div><div class="c" style="left:693.60px;top:511.30px;width:7.80px;height:7.80px;background:#29699c;box-shadow:0 0 0 1px rgba(0,0,0,0.6);"></div><div class="r" style="left:674.20px;top:509.40px;width:11.60px;height:11.60px;background:#f9a825;border-radius:0px;"></div><div class="t" style="right:769.30px;top:509.71px;font-size:11.4px;line-height:13.68px;color:#999;font-weight:normal;">source_height</div><div class="c" style="left:693.60px;top:530.40px;width:7.80px;height:7.80px;background:#7f7c8f;box-shadow:0 0 0 1px rgba(0,0,0,0.6);"></div><div class="r" style="left:674.20px;top:528.50px;width:11.60px;height:11.60px;background:#03a9f4;border-radius:0px;"></div><div class="t" style="right:769.30px;top:528.81px;font-size:11.4px;line-height:13.68px;color:#999;font-weight:normal;">loaded_fps</div><div class="c" style="left:693.60px;top:549.50px;width:7.80px;height:7.80px;background:#29699c;box-shadow:0 0 0 1px rgba(0,0,0,0.6);"></div><div class="r" style="left:674.20px;top:547.60px;width:11.60px;height:11.60px;background:#03a9f4;border-radius:0px;"></div><div class="t" style="right:769.30px;top:547.91px;font-size:11.4px;line-height:13.68px;color:#999;font-weight:normal;">loaded_frame_count</div><div class="c" style="left:693.60px;top:568.60px;width:7.80px;height:7.80px;background:#7f7c8f;box-shadow:0 0 0 1px rgba(0,0,0,0.6);"></div><div class="r" style="left:674.20px;top:566.70px;width:11.60px;height:11.60px;background:#03a9f4;border-radius:0px;"></div><div class="t" style="right:769.30px;top:567.01px;font-size:11.4px;line-height:13.68px;color:#999;font-weight:normal;">loaded_duration</div><div class="c" style="left:693.60px;top:587.70px;width:7.80px;height:7.80px;background:#29699c;box-shadow:0 0 0 1px rgba(0,0,0,0.6);"></div><div class="r" style="left:674.20px;top:585.80px;width:11.60px;height:11.60px;background:#03a9f4;border-radius:0px;"></div><div class="t" style="right:769.30px;top:586.11px;font-size:11.4px;line-height:13.68px;color:#999;font-weight:normal;">loaded_width</div><div class="c" style="left:693.60px;top:606.80px;width:7.80px;height:7.80px;background:#29699c;box-shadow:0 0 0 1px rgba(0,0,0,0.6);"></div><div class="r" style="left:674.20px;top:604.90px;width:11.60px;height:11.60px;background:#03a9f4;border-radius:0px;"></div><div class="t" style="right:769.30px;top:605.21px;font-size:11.4px;line-height:13.68px;color:#999;font-weight:normal;">loaded_height</div><div class="r" style="left:528.20px;top:377.40px;width:177.40px;height:18.60px;background:#111e11;border-radius:5px;"></div><div class="t" style="left:533.40px;top:381.09px;font-size:11.0px;line-height:13.20px;color:#fff;font-weight:bold;">#306 ComfyUI-VideoHelperSuite</div>
<div class="node" style="left:751.20px;top:100.00px;width:306.80px;height:534.80px;background:#353535;"></div><div class="r" style="left:751.20px;top:100.00px;width:306.80px;height:28.50px;background:#333333;border-radius:7.6px 7.6px 0 0;border-bottom:1px solid rgba(0,0,0,0.18)"></div><div class="c" style="left:760.60px;top:109.35px;width:9.80px;height:9.80px;background:#6e6e6e;"></div><div class="t" style="left:779.70px;top:107.46px;font-size:13.3px;line-height:15.96px;color:#999;font-weight:normal;">Video Combine</div><svg class="ic" style="left:877.00px;top:107.25px" width="15" height="14" viewBox="0 0 15 14"><circle cx="3.5" cy="3.2" r="2.6" fill="#7b68c8"/><circle cx="8.6" cy="3.2" r="2.6" fill="#7b68c8"/><rect x="1" y="5.6" width="10" height="7" rx="1" fill="#7b68c8"/><path d="M11 8 L14.5 6 L14.5 12.5 L11 10.5Z" fill="#7b68c8"/><rect x="2.5" y="8.5" width="6" height="1.6" fill="#e8e0f0"/><rect x="3.2" y="8.5" width="1" height="1.6" fill="#d44"/></svg><div class="c vh" style="left:893.30px;top:109.35px;width:9.8px;height:9.8px;background:#9c9c9c;"><span>V</span></div><div class="c vh" style="left:905.00px;top:109.35px;width:9.8px;height:9.8px;background:#9c9c9c;"><span>H</span></div><div class="c vh" style="left:916.70px;top:109.35px;width:9.8px;height:9.8px;background:#9c9c9c;"><span>S</span></div><div class="c" style="left:756.60px;top:138.00px;width:8.00px;height:8.00px;background:#64b5f6;"></div><div class="t" style="left:769.60px;top:136.51px;font-size:11.4px;line-height:13.68px;color:#999;font-weight:normal;">images</div><div class="c" style="left:756.60px;top:157.20px;width:8.00px;height:8.00px;background:#7f7c8f;"></div><div class="t" style="left:769.60px;top:155.71px;font-size:11.4px;line-height:13.68px;color:#999;font-weight:normal;">audio</div><div class="c" style="left:756.60px;top:176.40px;width:8.00px;height:8.00px;background:#7f7c8f;"></div><div class="t" style="left:769.60px;top:174.91px;font-size:11.4px;line-height:13.68px;color:#999;font-weight:normal;">meta_batch</div><div class="c" style="left:1044.40px;top:138.10px;width:7.80px;height:7.80px;background:#7f7c8f;box-shadow:0 0 0 1px rgba(0,0,0,0.6);"></div><div class="t" style="right:402.80px;top:136.51px;font-size:11.4px;line-height:13.68px;color:#999;font-weight:normal;">Filenames</div><div class="w" style="left:765.50px;top:191.70px;width:275.00px;height:17.00px;border-radius:9.50px"></div><svg class="ic" style="left:771.00px;top:195.50px" width="10" height="11.4"><path d="M0 5.7 L9.6 0 L9.6 11.4Z" fill="#ddd"/></svg><svg class="ic" style="left:1026.80px;top:195.50px" width="10" height="11.4"><path d="M9.6 5.7 L0 0 L0 11.4Z" fill="#ddd"/></svg><div class="t" style="left:784.50px;top:194.71px;font-size:11.4px;line-height:13.68px;color:#999;font-weight:normal;">frame_rate</div><div class="t" style="right:432.00px;top:194.71px;font-size:11.4px;line-height:13.68px;color:#ddd;font-weight:normal;">8</div><div class="w" style="left:765.50px;top:214.70px;width:275.00px;height:17.00px;border-radius:9.50px"></div><svg class="ic" style="left:771.00px;top:218.50px" width="10" height="11.4"><path d="M0 5.7 L9.6 0 L9.6 11.4Z" fill="#ddd"/></svg><svg class="ic" style="left:1026.80px;top:218.50px" width="10" height="11.4"><path d="M9.6 5.7 L0 0 L0 11.4Z" fill="#ddd"/></svg><div class="t" style="left:784.50px;top:217.71px;font-size:11.4px;line-height:13.68px;color:#999;font-weight:normal;">loop_count</div><div class="t" style="right:432.00px;top:217.71px;font-size:11.4px;line-height:13.68px;color:#ddd;font-weight:normal;">0</div><div class="w" style="left:765.50px;top:237.70px;width:275.00px;height:17.00px;border-radius:9.50px"></div><div class="t" style="left:779.50px;top:240.71px;font-size:11.4px;line-height:13.68px;color:#999;font-weight:normal;">filename_prefix</div><div class="t" style="right:412.00px;top:240.71px;font-size:11.4px;line-height:13.68px;color:#ddd;font-weight:normal;">AnimateDiff</div><div class="w" style="left:765.50px;top:260.70px;width:275.00px;height:17.00px;border-radius:9.50px"></div><svg class="ic" style="left:771.00px;top:264.50px" width="10" height="11.4"><path d="M0 5.7 L9.6 0 L9.6 11.4Z" fill="#ddd"/></svg><svg class="ic" style="left:1026.80px;top:264.50px" width="10" height="11.4"><path d="M9.6 5.7 L0 0 L0 11.4Z" fill="#ddd"/></svg><div class="t" style="left:784.50px;top:263.71px;font-size:11.4px;line-height:13.68px;color:#999;font-weight:normal;">format</div><div class="t" style="right:432.00px;top:263.71px;font-size:11.4px;line-height:13.68px;color:#ddd;font-weight:normal;">image/gif</div><div class="w" style="left:765.50px;top:283.70px;width:275.00px;height:17.00px;border-radius:9.50px"></div><div class="t" style="left:779.50px;top:286.71px;font-size:11.4px;line-height:13.68px;color:#999;font-weight:normal;">pingpong</div><div class="t" style="right:423.00px;top:286.71px;font-size:11.4px;line-height:13.68px;color:#999;font-weight:normal;">false</div><div class="c" style="left:1021.40px;top:286.60px;width:13.20px;height:13.20px;background:#2a2a2a;"></div><div class="w" style="left:765.50px;top:306.70px;width:275.00px;height:17.00px;border-radius:9.50px"></div><div class="t" style="left:779.50px;top:309.71px;font-size:11.4px;line-height:13.68px;color:#999;font-weight:normal;">save_output</div><div class="t" style="right:423.00px;top:309.71px;font-size:11.4px;line-height:13.68px;color:#ddd;font-weight:normal;">true</div><div class="c" style="left:1021.40px;top:309.60px;width:13.20px;height:13.20px;background:#8898aa;"></div><svg class="ic" style="overflow:hidden;left:761.30px;top:340.00px" width="286.70" height="286.80" viewBox="0 0 1315 1315" preserveAspectRatio="none"><rect width="1315" height="1315" fill="#fff"/><path d="M192 230 H1232 V1315 H172 V250 Q172 230 192 230Z" fill="#353535"/><rect x="286" y="315" width="697" height="760" fill="none" stroke="#5b50dc" stroke-width="7"/><rect x="283" y="230" width="205" height="85" fill="#3c3cf0"/><text x="305" y="290" font-family="Liberation Sans" font-size="42" fill="#e8e8ff">#4.face</text><circle cx="393" cy="412" r="8" fill="#fff"/><circle cx="438" cy="412" r="8" fill="#fff"/><circle cx="484" cy="412" r="8" fill="#fff"/><circle cx="527" cy="435" r="8" fill="#fff"/><circle cx="617" cy="412" r="8" fill="#fff"/><circle cx="685" cy="412" r="8" fill="#fff"/><circle cx="750" cy="390" r="8" fill="#fff"/><circle cx="797" cy="392" r="8" fill="#fff"/><circle cx="840" cy="435" r="8" fill="#fff"/><circle cx="350" cy="456" r="8" fill="#fff"/><circle cx="330" cy="522" r="8" fill="#fff"/><circle cx="438" cy="480" r="8" fill="#fff"/><circle cx="462" cy="480" r="8" fill="#fff"/><circle cx="484" cy="480" r="8" fill="#fff"/><circle cx="418" cy="502" r="8" fill="#fff"/><circle cx="440" cy="502" r="8" fill="#fff"/><circle cx="484" cy="502" r="8" fill="#fff"/><circle cx="527" cy="502" r="8" fill="#fff"/><circle cx="573" cy="480" r="8" fill="#fff"/><circle cx="573" cy="525" r="8" fill="#fff"/><circle cx="707" cy="458" r="8" fill="#fff"/><circle cx="750" cy="458" r="8" fill="#fff"/><circle cx="773" cy="480" r="8" fill="#fff"/><circle cx="685" cy="502" r="8" fill="#fff"/><circle cx="707" cy="502" r="8" fill="#fff"/><circle cx="750" cy="502" r="8" fill="#fff"/><circle cx="930" cy="502" r="8" fill="#fff"/><circle cx="573" cy="593" r="8" fill="#fff"/><circle cx="345" cy="592" r="8" fill="#fff"/><circle cx="910" cy="570" r="8" fill="#fff"/><circle cx="370" cy="660" r="8" fill="#fff"/><circle cx="573" cy="660" r="8" fill="#fff"/><circle cx="910" cy="660" r="8" fill="#fff"/><circle cx="527" cy="683" r="8" fill="#fff"/><circle cx="550" cy="683" r="8" fill="#fff"/><circle cx="617" cy="683" r="8" fill="#fff"/><circle cx="640" cy="683" r="8" fill="#fff"/><circle cx="595" cy="705" r="8" fill="#fff"/><circle cx="370" cy="728" r="8" fill="#fff"/><circle cx="907" cy="725" r="8" fill="#fff"/><circle cx="527" cy="748" r="8" fill="#fff"/><circle cx="573" cy="748" r="8" fill="#fff"/><circle cx="595" cy="748" r="8" fill="#fff"/><circle cx="617" cy="748" r="8" fill="#fff"/><circle cx="685" cy="748" r="8" fill="#fff"/><circle cx="505" cy="772" r="8" fill="#fff"/><circle cx="527" cy="772" r="8" fill="#fff"/><circle cx="573" cy="772" r="8" fill="#fff"/><circle cx="595" cy="772" r="8" fill="#fff"/><circle cx="640" cy="772" r="8" fill="#fff"/><circle cx="707" cy="772" r="8" fill="#fff"/><circle cx="730" cy="772" r="8" fill="#fff"/><circle cx="527" cy="795" r="8" fill="#fff"/><circle cx="573" cy="795" r="8" fill="#fff"/><circle cx="595" cy="795" r="8" fill="#fff"/><circle cx="640" cy="795" r="8" fill="#fff"/><circle cx="685" cy="795" r="8" fill="#fff"/><circle cx="393" cy="815" r="8" fill="#fff"/><circle cx="865" cy="815" r="8" fill="#fff"/><circle cx="438" cy="882" r="8" fill="#fff"/><circle cx="820" cy="882" r="8" fill="#fff"/><circle cx="484" cy="928" r="8" fill="#fff"/><circle cx="752" cy="928" r="8" fill="#fff"/><circle cx="527" cy="972" r="8" fill="#fff"/><circle cx="685" cy="972" r="8" fill="#fff"/><circle cx="597" cy="995" r="8" fill="#fff"/><path d="M340 585 L462 488" stroke="#7a10b0" stroke-width="18"/><path d="M462 488 L587 627" stroke="#3c10b8" stroke-width="15"/><path d="M587 627 L728 478" stroke="#a010b0" stroke-width="17"/><path d="M728 478 L938 570" stroke="#a0108a" stroke-width="17"/><path d="M587 627 L748 1300" stroke="#0a0ab8" stroke-width="14"/><path d="M195 1312 L748 1300" stroke="#a00000" stroke-width="18"/><path d="M748 1300 L1222 1245" stroke="#a84000" stroke-width="14"/><circle cx="587" cy="627" r="10" fill="#ff1010"/><circle cx="340" cy="585" r="9" fill="#ff30ff"/><circle cx="938" cy="570" r="10" fill="#ff1040"/><circle cx="748" cy="1300" r="10" fill="#ff7010"/><circle cx="1222" cy="1245" r="10" fill="#66ff20"/><circle cx="195" cy="1312" r="9" fill="#ffaa00"/></svg><div class="r" style="left:879.20px;top:81.20px;width:177.60px;height:18.30px;background:#111e11;border-radius:5px;"></div><div class="t" style="left:884.40px;top:84.74px;font-size:11.0px;line-height:13.20px;color:#fff;font-weight:bold;">#283 ComfyUI-VideoHelperSuite</div>
<div class="node" style="left:1114.60px;top:90.00px;width:302.10px;height:187.40px;background:#335533;"></div><div class="r" style="left:1114.60px;top:90.00px;width:302.10px;height:28.50px;background:#223322;border-radius:7.6px 7.6px 0 0;border-bottom:1px solid rgba(0,0,0,0.18)"></div><div class="c" style="left:1124.00px;top:99.35px;width:9.80px;height:9.80px;background:#6e6e6e;"></div><div class="t" style="left:1143.10px;top:97.46px;font-size:13.3px;line-height:15.96px;color:#999;font-weight:normal;">Apply ControlNet (Advanced)</div><div class="c" style="left:1120.00px;top:128.50px;width:8.00px;height:8.00px;background:#ffa931;"></div><div class="t" style="left:1133.00px;top:127.01px;font-size:11.4px;line-height:13.68px;color:#999;font-weight:normal;">positive</div><div class="c" style="left:1120.00px;top:147.70px;width:8.00px;height:8.00px;background:#ffa931;"></div><div class="t" style="left:1133.00px;top:146.21px;font-size:11.4px;line-height:13.68px;color:#999;font-weight:normal;">negative</div><div class="c" style="left:1120.00px;top:166.90px;width:8.00px;height:8.00px;background:#6fdcae;"></div><div class="t" style="left:1133.00px;top:165.41px;font-size:11.4px;line-height:13.68px;color:#999;font-weight:normal;">control_net</div><div class="c" style="left:1120.00px;top:186.10px;width:8.00px;height:8.00px;background:#64b5f6;"></div><div class="t" style="left:1133.00px;top:184.61px;font-size:11.4px;line-height:13.68px;color:#999;font-weight:normal;">image</div><div class="c" style="left:1403.10px;top:128.60px;width:7.80px;height:7.80px;background:#ffa931;box-shadow:0 0 0 1px rgba(0,0,0,0.6);"></div><div class="t" style="right:44.10px;top:127.01px;font-size:11.4px;line-height:13.68px;color:#999;font-weight:normal;">positive</div><div class="c" style="left:1403.10px;top:147.80px;width:7.80px;height:7.80px;background:#ffa931;box-shadow:0 0 0 1px rgba(0,0,0,0.6);"></div><div class="t" style="right:44.10px;top:146.21px;font-size:11.4px;line-height:13.68px;color:#999;font-weight:normal;">negative</div><div class="w" style="left:1128.90px;top:201.50px;width:270.20px;height:17.00px;border-radius:9.50px"></div><svg class="ic" style="left:1134.40px;top:205.30px" width="10" height="11.4"><path d="M0 5.7 L9.6 0 L9.6 11.4Z" fill="#ddd"/></svg><svg class="ic" style="left:1385.40px;top:205.30px" width="10" height="11.4"><path d="M9.6 5.7 L0 0 L0 11.4Z" fill="#ddd"/></svg><div class="t" style="left:1147.90px;top:204.51px;font-size:11.4px;line-height:13.68px;color:#999;font-weight:normal;">strength</div><div class="t" style="right:73.40px;top:204.51px;font-size:11.4px;line-height:13.68px;color:#ddd;font-weight:normal;">1.20</div><div class="w" style="left:1128.90px;top:224.50px;width:270.20px;height:17.00px;border-radius:9.50px"></div><svg class="ic" style="left:1134.40px;top:228.30px" width="10" height="11.4"><path d="M0 5.7 L9.6 0 L9.6 11.4Z" fill="#ddd"/></svg><svg class="ic" style="left:1385.40px;top:228.30px" width="10" height="11.4"><path d="M9.6 5.7 L0 0 L0 11.4Z" fill="#ddd"/></svg><div class="t" style="left:1147.90px;top:227.51px;font-size:11.4px;line-height:13.68px;color:#999;font-weight:normal;">start_percent</div><div class="t" style="right:73.40px;top:227.51px;font-size:11.4px;line-height:13.68px;color:#ddd;font-weight:normal;">0.000</div><div class="w" style="left:1128.90px;top:247.50px;width:270.20px;height:17.00px;border-radius:9.50px"></div><svg class="ic" style="left:1134.40px;top:251.30px" width="10" height="11.4"><path d="M0 5.7 L9.6 0 L9.6 11.4Z" fill="#ddd"/></svg><svg class="ic" style="left:1385.40px;top:251.30px" width="10" height="11.4"><path d="M9.6 5.7 L0 0 L0 11.4Z" fill="#ddd"/></svg><div class="t" style="left:1147.90px;top:250.51px;font-size:11.4px;line-height:13.68px;color:#999;font-weight:normal;">end_percent</div><div class="t" style="right:73.40px;top:250.51px;font-size:11.4px;line-height:13.68px;color:#ddd;font-weight:normal;">1.000</div><div class="r" style="left:1360.20px;top:71.20px;width:55.20px;height:18.40px;background:#111e11;border-radius:5px;"></div><div class="t" style="left:1365.40px;top:74.79px;font-size:11.0px;line-height:13.20px;color:#fff;font-weight:bold;">#285</div><svg class="ic" style="left:1396.10px;top:74.70px" width="12" height="12.6" viewBox="0 0 12 12.6"><path d="M1.3 1.2 L3.6 2.6 L8.4 2.6 L10.7 1.2 L11.2 8.4 L0.8 8.4Z" fill="#f47d2a"/><path d="M0.2 7.4 Q3.2 6.8 6 8.8 Q8.8 6.8 11.8 7.4 Q10.5 12 6 12.4 Q1.5 12 0.2 7.4Z" fill="#fde3b8"/><circle cx="4.3" cy="6.4" r="0.7" fill="#4a2a10"/><circle cx="7.7" cy="6.4" r="0.7" fill="#4a2a10"/><circle cx="6" cy="7.9" r="0.7" fill="#4a2a10"/></svg>
<div class="node" style="left:1122.00px;top:379.50px;width:280.10px;height:71.80px;background:#233222;"></div><div class="r" style="left:1122.00px;top:379.50px;width:280.10px;height:28.50px;background:#3a4a38;border-radius:7.6px 7.6px 0 0;border-bottom:1px solid rgba(0,0,0,0.18)"></div><div class="c" style="left:1131.40px;top:388.85px;width:9.80px;height:9.80px;background:#6e6e6e;"></div><div class="t" style="left:1150.50px;top:386.96px;font-size:13.3px;line-height:15.96px;color:#111;font-weight:normal;">OpenPose BoundingBox Tracker</div><div class="c" style="left:1127.40px;top:417.20px;width:8.00px;height:8.00px;background:#64b5f6;"></div><div class="t" style="left:1140.40px;top:415.71px;font-size:11.4px;line-height:13.68px;color:#111;font-weight:normal;">images</div><div class="c" style="left:1127.40px;top:436.40px;width:8.00px;height:8.00px;background:#6ef06e;"></div><div class="t" style="left:1140.40px;top:434.91px;font-size:11.4px;line-height:13.68px;color:#111;font-weight:normal;">pose_keypoints</div><div class="c" style="left:1388.50px;top:417.30px;width:7.80px;height:7.80px;background:#64b5f6;box-shadow:0 0 0 1px rgba(0,0,0,0.6);"></div><div class="t" style="right:58.70px;top:415.71px;font-size:11.4px;line-height:13.68px;color:#111;font-weight:normal;">IMAGE</div><div class="c" style="left:1388.50px;top:436.50px;width:7.80px;height:7.80px;background:#7f7c8f;box-shadow:0 0 0 1px rgba(0,0,0,0.6);"></div><div class="t" style="right:58.70px;top:434.91px;font-size:11.4px;line-height:13.68px;color:#111;font-weight:normal;">TRACKING</div><div class="r" style="left:1226.40px;top:360.20px;width:174.30px;height:18.60px;background:#111e11;border-radius:5px;"></div><div class="t" style="left:1231.60px;top:363.89px;font-size:11.0px;line-height:13.20px;color:#fff;font-weight:bold;">#281 Tracking Nodes for Videos</div>
<div class="node" style="left:1102.60px;top:494.00px;width:302.20px;height:125.60px;background:#354834;"></div><div class="r" style="left:1102.60px;top:494.00px;width:302.20px;height:28.50px;background:#4b5c49;border-radius:7.6px 7.6px 0 0;border-bottom:1px solid rgba(0,0,0,0.18)"></div><div class="c" style="left:1112.00px;top:503.35px;width:9.80px;height:9.80px;background:#6e6e6e;"></div><div class="t" style="left:1131.10px;top:501.46px;font-size:13.3px;line-height:15.96px;color:#111;font-weight:normal;">ImageBlend</div><div class="c" style="left:1108.00px;top:531.90px;width:8.00px;height:8.00px;background:#64b5f6;"></div><div class="t" style="left:1121.00px;top:530.41px;font-size:11.4px;line-height:13.68px;color:#111;font-weight:normal;">image1</div><div class="c" style="left:1108.00px;top:551.30px;width:8.00px;height:8.00px;background:#64b5f6;"></div><div class="t" style="left:1121.00px;top:549.81px;font-size:11.4px;line-height:13.68px;color:#111;font-weight:normal;">image2</div><div class="c" style="left:1391.20px;top:532.00px;width:7.80px;height:7.80px;background:#64b5f6;box-shadow:0 0 0 1px rgba(0,0,0,0.6);"></div><div class="t" style="right:56.00px;top:530.41px;font-size:11.4px;line-height:13.68px;color:#111;font-weight:normal;">IMAGE</div><div class="w" style="left:1116.90px;top:566.30px;width:270.30px;height:17.00px;border-radius:9.50px"></div><svg class="ic" style="left:1122.40px;top:570.10px" width="10" height="11.4"><path d="M0 5.7 L9.6 0 L9.6 11.4Z" fill="#ddd"/></svg><svg class="ic" style="left:1373.50px;top:570.10px" width="10" height="11.4"><path d="M9.6 5.7 L0 0 L0 11.4Z" fill="#ddd"/></svg><div class="t" style="left:1135.90px;top:569.31px;font-size:11.4px;line-height:13.68px;color:#999;font-weight:normal;">blend_factor</div><div class="t" style="right:85.30px;top:569.31px;font-size:11.4px;line-height:13.68px;color:#ddd;font-weight:normal;">1.00</div><div class="w" style="left:1116.90px;top:589.50px;width:270.30px;height:17.00px;border-radius:9.50px"></div><svg class="ic" style="left:1122.40px;top:593.30px" width="10" height="11.4"><path d="M0 5.7 L9.6 0 L9.6 11.4Z" fill="#ddd"/></svg><svg class="ic" style="left:1373.50px;top:593.30px" width="10" height="11.4"><path d="M9.6 5.7 L0 0 L0 11.4Z" fill="#ddd"/></svg><div class="t" style="left:1135.90px;top:592.51px;font-size:11.4px;line-height:13.68px;color:#999;font-weight:normal;">blend_mode</div><div class="t" style="right:85.30px;top:592.51px;font-size:11.4px;line-height:13.68px;color:#ddd;font-weight:normal;">overlay</div><div class="r" style="left:1348.20px;top:475.20px;width:55.30px;height:17.80px;background:#111e11;border-radius:5px;"></div><div class="t" style="left:1353.40px;top:478.49px;font-size:11.0px;line-height:13.20px;color:#fff;font-weight:bold;">#292</div><svg class="ic" style="left:1384.20px;top:478.40px" width="12" height="12.6" viewBox="0 0 12 12.6"><path d="M1.3 1.2 L3.6 2.6 L8.4 2.6 L10.7 1.2 L11.2 8.4 L0.8 8.4Z" fill="#f47d2a"/><path d="M0.2 7.4 Q3.2 6.8 6 8.8 Q8.8 6.8 11.8 7.4 Q10.5 12 6 12.4 Q1.5 12 0.2 7.4Z" fill="#fde3b8"/><circle cx="4.3" cy="6.4" r="0.7" fill="#4a2a10"/><circle cx="7.7" cy="6.4" r="0.7" fill="#4a2a10"/><circle cx="6" cy="7.9" r="0.7" fill="#4a2a10"/></svg>
<div class="node" style="left:52.70px;top:665.00px;width:302.10px;height:106.00px;background:#353535;"></div><div class="r" style="left:52.70px;top:665.00px;width:302.10px;height:28.50px;background:#333333;border-radius:7.6px 7.6px 0 0;border-bottom:1px solid rgba(0,0,0,0.18)"></div><div class="c" style="left:62.10px;top:674.35px;width:9.80px;height:9.80px;background:#6e6e6e;"></div><div class="t" style="left:81.20px;top:672.46px;font-size:13.3px;line-height:15.96px;color:#999;font-weight:normal;">AIO Aux Preprocessor</div><div class="c" style="left:58.10px;top:702.60px;width:8.00px;height:8.00px;background:#64b5f6;"></div><div class="t" style="left:71.10px;top:701.11px;font-size:11.4px;line-height:13.68px;color:#999;font-weight:normal;">image</div><div class="c" style="left:341.20px;top:702.70px;width:7.80px;height:7.80px;background:#64b5f6;box-shadow:0 0 0 1px rgba(0,0,0,0.6);"></div><div class="t" style="right:1106.00px;top:701.11px;font-size:11.4px;line-height:13.68px;color:#999;font-weight:normal;">IMAGE</div><div class="w" style="left:66.60px;top:718.30px;width:270.60px;height:17.00px;border-radius:9.50px"></div><svg class="ic" style="left:72.10px;top:722.10px" width="10" height="11.4"><path d="M0 5.7 L9.6 0 L9.6 11.4Z" fill="#ddd"/></svg><svg class="ic" style="left:323.50px;top:722.10px" width="10" height="11.4"><path d="M9.6 5.7 L0 0 L0 11.4Z" fill="#ddd"/></svg><div class="t" style="left:85.60px;top:721.31px;font-size:11.4px;line-height:13.68px;color:#999;font-weight:normal;">preprocessor</div><div class="t" style="right:1135.30px;top:721.31px;font-size:11.4px;line-height:13.68px;color:#ddd;font-weight:normal;">DepthAnythingPreprocessor</div><div class="w" style="left:66.60px;top:741.30px;width:270.60px;height:17.00px;border-radius:9.50px"></div><svg class="ic" style="left:72.10px;top:745.10px" width="10" height="11.4"><path d="M0 5.7 L9.6 0 L9.6 11.4Z" fill="#ddd"/></svg><svg class="ic" style="left:323.50px;top:745.10px" width="10" height="11.4"><path d="M9.6 5.7 L0 0 L0 11.4Z" fill="#ddd"/></svg><div class="t" style="left:85.60px;top:744.31px;font-size:11.4px;line-height:13.68px;color:#999;font-weight:normal;">resolution</div><div class="t" style="right:1135.30px;top:744.31px;font-size:11.4px;line-height:13.68px;color:#ddd;font-weight:normal;">512</div><div class="r" style="left:179.60px;top:645.60px;width:173.80px;height:18.00px;background:#111e11;border-radius:5px;"></div><div class="t" style="left:184.80px;top:648.99px;font-size:11.0px;line-height:13.20px;color:#fff;font-weight:bold;">#289 ComfyUI&#x27;s ControlNet Au..</div>
<div class="node" style="left:136.80px;top:800.40px;width:201.30px;height:56.60px;background:#353535;"></div><div class="r" style="left:136.80px;top:800.40px;width:201.30px;height:28.50px;background:#333333;border-radius:7.6px 7.6px 0 0;border-bottom:1px solid rgba(0,0,0,0.18)"></div><div class="c" style="left:146.20px;top:809.75px;width:9.80px;height:9.80px;background:#6e6e6e;"></div><div class="t" style="left:165.30px;top:807.86px;font-size:13.3px;line-height:15.96px;color:#999;font-weight:normal;">Invert Image</div><div class="c" style="left:142.20px;top:838.60px;width:8.00px;height:8.00px;background:#64b5f6;"></div><div class="t" style="left:155.20px;top:837.11px;font-size:11.4px;line-height:13.68px;color:#999;font-weight:normal;">image</div><div class="c" style="left:324.50px;top:838.70px;width:7.80px;height:7.80px;background:#64b5f6;box-shadow:0 0 0 1px rgba(0,0,0,0.6);"></div><div class="t" style="right:1122.70px;top:837.11px;font-size:11.4px;line-height:13.68px;color:#999;font-weight:normal;">IMAGE</div><div class="r" style="left:281.20px;top:781.60px;width:55.50px;height:18.00px;background:#111e11;border-radius:5px;"></div><div class="t" style="left:286.40px;top:784.99px;font-size:11.0px;line-height:13.20px;color:#fff;font-weight:bold;">#291</div><svg class="ic" style="left:317.40px;top:784.90px" width="12" height="12.6" viewBox="0 0 12 12.6"><path d="M1.3 1.2 L3.6 2.6 L8.4 2.6 L10.7 1.2 L11.2 8.4 L0.8 8.4Z" fill="#f47d2a"/><path d="M0.2 7.4 Q3.2 6.8 6 8.8 Q8.8 6.8 11.8 7.4 Q10.5 12 6 12.4 Q1.5 12 0.2 7.4Z" fill="#fde3b8"/><circle cx="4.3" cy="6.4" r="0.7" fill="#4a2a10"/><circle cx="7.7" cy="6.4" r="0.7" fill="#4a2a10"/><circle cx="6" cy="7.9" r="0.7" fill="#4a2a10"/></svg>
<div class="node" style="left:43.60px;top:894.80px;width:301.40px;height:83.00px;background:#353535;"></div><div class="r" style="left:43.60px;top:894.80px;width:301.40px;height:28.50px;background:#333333;border-radius:7.6px 7.6px 0 0;border-bottom:1px solid rgba(0,0,0,0.18)"></div><div class="c" style="left:53.00px;top:904.15px;width:9.80px;height:9.80px;background:#6e6e6e;"></div><div class="t" style="left:72.10px;top:902.26px;font-size:13.3px;line-height:15.96px;color:#999;font-weight:normal;">Image To Mask</div><div class="c" style="left:49.00px;top:932.20px;width:8.00px;height:8.00px;background:#64b5f6;"></div><div class="t" style="left:62.00px;top:930.71px;font-size:11.4px;line-height:13.68px;color:#999;font-weight:normal;">image</div><div class="c" style="left:331.40px;top:932.30px;width:7.80px;height:7.80px;background:#81c784;box-shadow:0 0 0 1px rgba(0,0,0,0.6);"></div><div class="t" style="right:1115.80px;top:930.71px;font-size:11.4px;line-height:13.68px;color:#999;font-weight:normal;">MASK</div><div class="w" style="left:57.50px;top:947.60px;width:270.00px;height:17.00px;border-radius:9.50px"></div><svg class="ic" style="left:63.00px;top:951.40px" width="10" height="11.4"><path d="M0 5.7 L9.6 0 L9.6 11.4Z" fill="#ddd"/></svg><svg class="ic" style="left:313.80px;top:951.40px" width="10" height="11.4"><path d="M9.6 5.7 L0 0 L0 11.4Z" fill="#ddd"/></svg><div class="t" style="left:76.50px;top:950.61px;font-size:11.4px;line-height:13.68px;color:#999;font-weight:normal;">method</div><div class="t" style="right:1145.00px;top:950.61px;font-size:11.4px;line-height:13.68px;color:#ddd;font-weight:normal;">intensity</div><div class="r" style="left:204.00px;top:875.40px;width:140.20px;height:18.00px;background:#111e11;border-radius:5px;"></div><div class="t" style="left:209.20px;top:878.79px;font-size:11.0px;line-height:13.20px;color:#fff;font-weight:bold;">#305 Masquerade Nodes</div>
<div class="node" style="left:378.60px;top:675.30px;width:306.20px;height:600.60px;background:#353535;"></div><div class="r" style="left:378.60px;top:675.30px;width:306.20px;height:28.50px;background:#333333;border-radius:7.6px 7.6px 0 0;border-bottom:1px solid rgba(0,0,0,0.18)"></div><div class="c" style="left:388.00px;top:684.65px;width:9.80px;height:9.80px;background:#6e6e6e;"></div><div class="t" style="left:407.10px;top:682.76px;font-size:13.3px;line-height:15.96px;color:#999;font-weight:normal;">Video Combine</div><svg class="ic" style="left:504.50px;top:682.55px" width="15" height="14" viewBox="0 0 15 14"><circle cx="3.5" cy="3.2" r="2.6" fill="#7b68c8"/><circle cx="8.6" cy="3.2" r="2.6" fill="#7b68c8"/><rect x="1" y="5.6" width="10" height="7" rx="1" fill="#7b68c8"/><path d="M11 8 L14.5 6 L14.5 12.5 L11 10.5Z" fill="#7b68c8"/><rect x="2.5" y="8.5" width="6" height="1.6" fill="#e8e0f0"/><rect x="3.2" y="8.5" width="1" height="1.6" fill="#d44"/></svg><div class="c vh" style="left:520.80px;top:684.65px;width:9.8px;height:9.8px;background:#9c9c9c;"><span>V</span></div><div class="c vh" style="left:532.50px;top:684.65px;width:9.8px;height:9.8px;background:#9c9c9c;"><span>H</span></div><div class="c vh" style="left:544.20px;top:684.65px;width:9.8px;height:9.8px;background:#9c9c9c;"><span>S</span></div><div class="c" style="left:384.00px;top:712.30px;width:8.00px;height:8.00px;background:#64b5f6;"></div><div class="t" style="left:397.00px;top:710.81px;font-size:11.4px;line-height:13.68px;color:#999;font-weight:normal;">images</div><div class="c" style="left:384.00px;top:731.40px;width:8.00px;height:8.00px;background:#7f7c8f;"></div><div class="t" style="left:397.00px;top:729.91px;font-size:11.4px;line-height:13.68px;color:#999;font-weight:normal;">audio</div><div class="c" style="left:384.00px;top:750.50px;width:8.00px;height:8.00px;background:#7f7c8f;"></div><div class="t" style="left:397.00px;top:749.01px;font-size:11.4px;line-height:13.68px;color:#999;font-weight:normal;">meta_batch</div><div class="c" style="left:671.20px;top:712.40px;width:7.80px;height:7.80px;background:#7f7c8f;box-shadow:0 0 0 1px rgba(0,0,0,0.6);"></div><div class="t" style="right:776.00px;top:710.81px;font-size:11.4px;line-height:13.68px;color:#999;font-weight:normal;">Filenames</div><div class="w" style="left:392.50px;top:765.70px;width:274.50px;height:17.00px;border-radius:9.50px"></div><svg class="ic" style="left:398.00px;top:769.50px" width="10" height="11.4"><path d="M0 5.7 L9.6 0 L9.6 11.4Z" fill="#ddd"/></svg><svg class="ic" style="left:653.30px;top:769.50px" width="10" height="11.4"><path d="M9.6 5.7 L0 0 L0 11.4Z" fill="#ddd"/></svg><div class="t" style="left:411.50px;top:768.71px;font-size:11.4px;line-height:13.68px;color:#999;font-weight:normal;">frame_rate</div><div class="t" style="right:805.50px;top:768.71px;font-size:11.4px;line-height:13.68px;color:#ddd;font-weight:normal;">8</div><div class="w" style="left:392.50px;top:788.74px;width:274.50px;height:17.00px;border-radius:9.50px"></div><svg class="ic" style="left:398.00px;top:792.54px" width="10" height="11.4"><path d="M0 5.7 L9.6 0 L9.6 11.4Z" fill="#ddd"/></svg><svg class="ic" style="left:653.30px;top:792.54px" width="10" height="11.4"><path d="M9.6 5.7 L0 0 L0 11.4Z" fill="#ddd"/></svg><div class="t" style="left:411.50px;top:791.75px;font-size:11.4px;line-height:13.68px;color:#999;font-weight:normal;">loop_count</div><div class="t" style="right:805.50px;top:791.75px;font-size:11.4px;line-height:13.68px;color:#ddd;font-weight:normal;">0</div><div class="w" style="left:392.50px;top:811.78px;width:274.50px;height:17.00px;border-radius:9.50px"></div><div class="t" style="left:406.50px;top:814.79px;font-size:11.4px;line-height:13.68px;color:#999;font-weight:normal;">filename_prefix</div><div class="t" style="right:785.50px;top:814.79px;font-size:11.4px;line-height:13.68px;color:#ddd;font-weight:normal;">AnimateDiff</div><div class="w" style="left:392.50px;top:834.82px;width:274.50px;height:17.00px;border-radius:9.50px"></div><svg class="ic" style="left:398.00px;top:838.62px" width="10" height="11.4"><path d="M0 5.7 L9.6 0 L9.6 11.4Z" fill="#ddd"/></svg><svg class="ic" style="left:653.30px;top:838.62px" width="10" height="11.4"><path d="M9.6 5.7 L0 0 L0 11.4Z" fill="#ddd"/></svg><div class="t" style="left:411.50px;top:837.83px;font-size:11.4px;line-height:13.68px;color:#999;font-weight:normal;">format</div><div class="t" style="right:805.50px;top:837.83px;font-size:11.4px;line-height:13.68px;color:#ddd;font-weight:normal;">video/h264-mp4</div><div class="w" style="left:392.50px;top:857.86px;width:274.50px;height:17.00px;border-radius:9.50px"></div><svg class="ic" style="left:398.00px;top:861.66px" width="10" height="11.4"><path d="M0 5.7 L9.6 0 L9.6 11.4Z" fill="#ddd"/></svg><svg class="ic" style="left:653.30px;top:861.66px" width="10" height="11.4"><path d="M9.6 5.7 L0 0 L0 11.4Z" fill="#ddd"/></svg><div class="t" style="left:411.50px;top:860.87px;font-size:11.4px;line-height:13.68px;color:#999;font-weight:normal;">pix_fmt</div><div class="t" style="right:805.50px;top:860.87px;font-size:11.4px;line-height:13.68px;color:#ddd;font-weight:normal;">yuv420p</div><div class="w" style="left:392.50px;top:880.90px;width:274.50px;height:17.00px;border-radius:9.50px"></div><svg class="ic" style="left:398.00px;top:884.70px" width="10" height="11.4"><path d="M0 5.7 L9.6 0 L9.6 11.4Z" fill="#ddd"/></svg><svg class="ic" style="left:653.30px;top:884.70px" width="10" height="11.4"><path d="M9.6 5.7 L0 0 L0 11.4Z" fill="#ddd"/></svg><div class="t" style="left:411.50px;top:883.91px;font-size:11.4px;line-height:13.68px;color:#999;font-weight:normal;">crf</div><div class="t" style="right:805.50px;top:883.91px;font-size:11.4px;line-height:13.68px;color:#ddd;font-weight:normal;">19</div><div class="w" style="left:392.50px;top:903.94px;width:274.50px;height:17.00px;border-radius:9.50px"></div><div class="t" style="left:406.50px;top:906.95px;font-size:11.4px;line-height:13.68px;color:#999;font-weight:normal;">save_metadata</div><div class="t" style="right:796.50px;top:906.95px;font-size:11.4px;line-height:13.68px;color:#ddd;font-weight:normal;">true</div><div class="c" style="left:647.90px;top:906.84px;width:13.20px;height:13.20px;background:#8898aa;"></div><div class="w" style="left:392.50px;top:926.98px;width:274.50px;height:17.00px;border-radius:9.50px"></div><div class="t" style="left:406.50px;top:929.99px;font-size:11.4px;line-height:13.68px;color:#999;font-weight:normal;">pingpong</div><div class="t" style="right:796.50px;top:929.99px;font-size:11.4px;line-height:13.68px;color:#999;font-weight:normal;">false</div><div class="c" style="left:647.90px;top:929.88px;width:13.20px;height:13.20px;background:#2a2a2a;"></div><div class="w" style="left:392.50px;top:950.02px;width:274.50px;height:17.00px;border-radius:9.50px"></div><div class="t" style="left:406.50px;top:953.03px;font-size:11.4px;line-height:13.68px;color:#999;font-weight:normal;">save_output</div><div class="t" style="right:796.50px;top:953.03px;font-size:11.4px;line-height:13.68px;color:#ddd;font-weight:normal;">true</div><div class="c" style="left:647.90px;top:952.92px;width:13.20px;height:13.20px;background:#8898aa;"></div><svg class="ic" style="overflow:hidden;left:388.30px;top:983.60px" width="286.20" height="285.90" viewBox="0 0 1315 1315" preserveAspectRatio="none"><defs>
<radialGradient id="hga" cx="0.45" cy="0.5" r="0.55"><stop offset="0" stop-color="#d0d0d0"/><stop offset="1" stop-color="#bfbfbf"/></radialGradient>
<linearGradient id="bga" x1="0" y1="0" x2="1" y2="1"><stop offset="0" stop-color="#000"/><stop offset="1" stop-color="#0a0a0a"/></linearGradient>
<linearGradient id="lsa" x1="0" y1="0" x2="1" y2="1"><stop offset="0" stop-color="#b4b4b4"/><stop offset="1" stop-color="#c6c6c6"/></linearGradient>
<linearGradient id="nea" x1="0" y1="0" x2="0" y2="1"><stop offset="0" stop-color="#b2b2b2"/><stop offset="1" stop-color="#a4a4a4"/></linearGradient>
<linearGradient id="rsa" x1="0.2" y1="0.1" x2="0.9" y2="1"><stop offset="0" stop-color="#cdcdcd"/><stop offset="1" stop-color="#f4f4f4"/></linearGradient>
</defs>
<rect width="1315" height="1315" fill="url(#bga)"/>
<g transform="">
<path d="M0.0 1315.0 C0.0 1303.8 0.0 1259.2 0.0 1248.0 C12.2 1240.5 42.5 1219.7 73.0 1203.0 C103.5 1186.3 145.0 1166.3 183.0 1148.0 C221.0 1129.7 267.7 1111.3 301.0 1093.0 C334.3 1074.7 360.2 1057.8 383.0 1038.0 C405.8 1018.2 424.3 990.7 438.0 974.0 C451.7 957.3 462.0 956.2 465.0 938.0 C468.0 919.8 463.5 884.8 456.0 865.0 C448.5 845.2 430.7 838.8 420.0 819.0 C409.3 799.2 399.7 768.7 392.0 746.0 C384.3 723.3 380.8 702.7 374.0 683.0 C367.2 663.3 357.0 644.5 351.0 628.0 C345.0 611.5 341.0 603.5 338.0 584.0 C335.0 564.5 333.0 528.5 333.0 511.0 C333.0 493.5 341.0 492.7 338.0 479.0 C335.0 465.3 321.8 446.5 315.0 429.0 C308.2 411.5 303.2 390.7 297.0 374.0 C290.8 357.3 281.5 343.0 278.0 329.0 C274.5 315.0 280.5 300.0 276.0 290.0 C271.5 280.0 255.2 272.5 251.0 269.0 C257.5 266.7 281.7 263.3 290.0 255.0 C298.3 246.7 291.5 237.2 301.0 219.0 C310.5 200.8 328.7 170.3 347.0 146.0 C365.3 121.7 383.7 93.5 411.0 73.0 C438.3 52.5 479.2 32.8 511.0 23.0 C542.8 13.2 571.5 12.5 602.0 14.0 C632.5 15.5 666.5 23.7 694.0 32.0 C721.5 40.3 748.8 54.2 767.0 64.0 C785.2 73.8 790.8 85.7 803.0 91.0 C815.2 96.3 824.8 88.3 840.0 96.0 C855.2 103.7 875.8 118.0 894.0 137.0 C912.2 156.0 934.5 185.7 949.0 210.0 C963.5 234.3 974.8 257.2 981.0 283.0 C987.2 308.8 986.7 336.2 986.0 365.0 C985.3 393.8 979.3 425.5 977.0 456.0 C974.7 486.5 974.5 524.0 972.0 548.0 C969.5 572.0 967.3 582.2 962.0 600.0 C956.7 617.8 945.2 642.8 940.0 655.0 C934.8 667.2 931.8 663.8 931.0 673.0 C930.2 682.2 938.0 697.8 935.0 710.0 C932.0 722.2 916.0 726.3 913.0 746.0 C910.0 765.7 908.0 809.7 917.0 828.0 C926.0 846.3 949.5 839.2 967.0 856.0 C984.5 872.8 1000.7 906.2 1022.0 929.0 C1043.3 951.8 1078.3 982.3 1095.0 993.0 C1111.7 1003.7 1100.7 983.8 1122.0 993.0 C1143.3 1002.2 1203.2 1034.3 1223.0 1048.0 C1242.8 1061.7 1225.7 1062.2 1241.0 1075.0 C1256.3 1087.8 1302.7 1116.7 1315.0 1125.0 C1315.0 1156.7 1315.0 1283.3 1315.0 1315.0 C1095.8 1315.0 219.2 1315.0 0.0 1315.0Z" fill="url(#hga)"/>
<path d="M0.0 1315.0 C0.0 1303.8 0.0 1259.2 0.0 1248.0 C12.2 1240.5 42.5 1219.7 73.0 1203.0 C103.5 1186.3 145.0 1166.3 183.0 1148.0 C221.0 1129.7 267.7 1111.3 301.0 1093.0 C334.3 1074.7 360.2 1057.8 383.0 1038.0 C405.8 1018.2 424.3 989.5 438.0 974.0 C451.7 958.5 460.5 949.8 465.0 945.0 C469.7 965.2 491.3 1027.7 493.0 1066.0 C494.7 1104.3 479.7 1133.5 475.0 1175.0 C470.3 1216.5 466.7 1291.7 465.0 1315.0 C387.5 1315.0 77.5 1315.0 0.0 1315.0Z" fill="url(#lsa)"/>
<path d="M465.0 945.0 C474.2 948.8 498.7 962.5 520.0 968.0 C541.3 973.5 566.3 979.7 593.0 978.0 C619.7 976.3 652.2 969.7 680.0 958.0 C707.8 946.3 731.7 927.7 760.0 908.0 C788.3 888.3 823.8 859.7 850.0 840.0 C876.2 820.3 905.8 798.3 917.0 790.0 C918.3 800.0 922.0 835.0 925.0 850.0 C928.0 865.0 933.3 875.0 935.0 880.0 C919.2 897.2 880.2 946.0 840.0 983.0 C799.8 1020.0 727.5 1073.0 694.0 1102.0 C660.5 1131.0 649.7 1137.2 639.0 1157.0 C628.3 1176.8 645.2 1194.7 630.0 1221.0 C614.8 1247.3 561.7 1299.3 548.0 1315.0 C534.2 1315.0 478.8 1315.0 465.0 1315.0 C466.7 1291.7 470.3 1216.5 475.0 1175.0 C479.7 1133.5 494.7 1104.3 493.0 1066.0 C491.3 1027.7 469.7 965.2 465.0 945.0Z" fill="url(#nea)"/>
<path d="M935.0 880.0 C940.3 876.0 952.5 847.8 967.0 856.0 C981.5 864.2 1000.7 906.2 1022.0 929.0 C1043.3 951.8 1078.3 982.3 1095.0 993.0 C1111.7 1003.7 1100.7 983.8 1122.0 993.0 C1143.3 1002.2 1203.2 1034.3 1223.0 1048.0 C1242.8 1061.7 1225.7 1062.2 1241.0 1075.0 C1256.3 1087.8 1302.7 1116.7 1315.0 1125.0 C1315.0 1156.7 1315.0 1283.3 1315.0 1315.0 C1187.2 1315.0 675.8 1315.0 548.0 1315.0 C561.7 1299.3 614.8 1247.3 630.0 1221.0 C645.2 1194.7 628.3 1176.8 639.0 1157.0 C649.7 1137.2 660.5 1131.0 694.0 1102.0 C727.5 1073.0 799.8 1020.0 840.0 983.0 C880.2 946.0 919.2 897.2 935.0 880.0Z" fill="url(#rsa)"/>
</g></svg><div class="r" style="left:506.30px;top:655.30px;width:177.10px;height:18.60px;background:#111e11;border-radius:5px;"></div><div class="t" style="left:511.50px;top:658.99px;font-size:11.0px;line-height:13.20px;color:#fff;font-weight:bold;">#287 ComfyUI-VideoHelperSuite</div>
<div class="node" style="left:739.20px;top:676.40px;width:307.10px;height:602.00px;background:#353535;"></div><div class="r" style="left:739.20px;top:676.40px;width:307.10px;height:28.50px;background:#333333;border-radius:7.6px 7.6px 0 0;border-bottom:1px solid rgba(0,0,0,0.18)"></div><div class="c" style="left:748.60px;top:685.75px;width:9.80px;height:9.80px;background:#6e6e6e;"></div><div class="t" style="left:767.70px;top:683.86px;font-size:13.3px;line-height:15.96px;color:#999;font-weight:normal;">Video Combine</div><svg class="ic" style="left:865.00px;top:683.65px" width="15" height="14" viewBox="0 0 15 14"><circle cx="3.5" cy="3.2" r="2.6" fill="#7b68c8"/><circle cx="8.6" cy="3.2" r="2.6" fill="#7b68c8"/><rect x="1" y="5.6" width="10" height="7" rx="1" fill="#7b68c8"/><path d="M11 8 L14.5 6 L14.5 12.5 L11 10.5Z" fill="#7b68c8"/><rect x="2.5" y="8.5" width="6" height="1.6" fill="#e8e0f0"/><rect x="3.2" y="8.5" width="1" height="1.6" fill="#d44"/></svg><div class="c vh" style="left:881.30px;top:685.75px;width:9.8px;height:9.8px;background:#9c9c9c;"><span>V</span></div><div class="c vh" style="left:893.00px;top:685.75px;width:9.8px;height:9.8px;background:#9c9c9c;"><span>H</span></div><div class="c vh" style="left:904.70px;top:685.75px;width:9.8px;height:9.8px;background:#9c9c9c;"><span>S</span></div><div class="c" style="left:744.60px;top:714.60px;width:8.00px;height:8.00px;background:#64b5f6;"></div><div class="t" style="left:757.60px;top:713.11px;font-size:11.4px;line-height:13.68px;color:#999;font-weight:normal;">images</div><div class="c" style="left:744.60px;top:733.70px;width:8.00px;height:8.00px;background:#7f7c8f;"></div><div class="t" style="left:757.60px;top:732.21px;font-size:11.4px;line-height:13.68px;color:#999;font-weight:normal;">audio</div><div class="c" style="left:744.60px;top:752.80px;width:8.00px;height:8.00px;background:#7f7c8f;"></div><div class="t" style="left:757.60px;top:751.31px;font-size:11.4px;line-height:13.68px;color:#999;font-weight:normal;">meta_batch</div><div class="c" style="left:1032.70px;top:714.70px;width:7.80px;height:7.80px;background:#7f7c8f;box-shadow:0 0 0 1px rgba(0,0,0,0.6);"></div><div class="t" style="right:414.50px;top:713.11px;font-size:11.4px;line-height:13.68px;color:#999;font-weight:normal;">Filenames</div><div class="w" style="left:753.40px;top:767.60px;width:275.30px;height:17.00px;border-radius:9.50px"></div><svg class="ic" style="left:758.90px;top:771.40px" width="10" height="11.4"><path d="M0 5.7 L9.6 0 L9.6 11.4Z" fill="#ddd"/></svg><svg class="ic" style="left:1015.00px;top:771.40px" width="10" height="11.4"><path d="M9.6 5.7 L0 0 L0 11.4Z" fill="#ddd"/></svg><div class="t" style="left:772.40px;top:770.61px;font-size:11.4px;line-height:13.68px;color:#999;font-weight:normal;">frame_rate</div><div class="t" style="right:443.80px;top:770.61px;font-size:11.4px;line-height:13.68px;color:#ddd;font-weight:normal;">8</div><div class="w" style="left:753.40px;top:790.64px;width:275.30px;height:17.00px;border-radius:9.50px"></div><svg class="ic" style="left:758.90px;top:794.44px" width="10" height="11.4"><path d="M0 5.7 L9.6 0 L9.6 11.4Z" fill="#ddd"/></svg><svg class="ic" style="left:1015.00px;top:794.44px" width="10" height="11.4"><path d="M9.6 5.7 L0 0 L0 11.4Z" fill="#ddd"/></svg><div class="t" style="left:772.40px;top:793.65px;font-size:11.4px;line-height:13.68px;color:#999;font-weight:normal;">loop_count</div><div class="t" style="right:443.80px;top:793.65px;font-size:11.4px;line-height:13.68px;color:#ddd;font-weight:normal;">0</div><div class="w" style="left:753.40px;top:813.68px;width:275.30px;height:17.00px;border-radius:9.50px"></div><div class="t" style="left:767.40px;top:816.69px;font-size:11.4px;line-height:13.68px;color:#999;font-weight:normal;">filename_prefix</div><div class="t" style="right:423.80px;top:816.69px;font-size:11.4px;line-height:13.68px;color:#ddd;font-weight:normal;">AnimateDiff</div><div class="w" style="left:753.40px;top:836.72px;width:275.30px;height:17.00px;border-radius:9.50px"></div><svg class="ic" style="left:758.90px;top:840.52px" width="10" height="11.4"><path d="M0 5.7 L9.6 0 L9.6 11.4Z" fill="#ddd"/></svg><svg class="ic" style="left:1015.00px;top:840.52px" width="10" height="11.4"><path d="M9.6 5.7 L0 0 L0 11.4Z" fill="#ddd"/></svg><div class="t" style="left:772.40px;top:839.73px;font-size:11.4px;line-height:13.68px;color:#999;font-weight:normal;">format</div><div class="t" style="right:443.80px;top:839.73px;font-size:11.4px;line-height:13.68px;color:#ddd;font-weight:normal;">video/h264-mp4</div><div class="w" style="left:753.40px;top:859.76px;width:275.30px;height:17.00px;border-radius:9.50px"></div><svg class="ic" style="left:758.90px;top:863.56px" width="10" height="11.4"><path d="M0 5.7 L9.6 0 L9.6 11.4Z" fill="#ddd"/></svg><svg class="ic" style="left:1015.00px;top:863.56px" width="10" height="11.4"><path d="M9.6 5.7 L0 0 L0 11.4Z" fill="#ddd"/></svg><div class="t" style="left:772.40px;top:862.77px;font-size:11.4px;line-height:13.68px;color:#999;font-weight:normal;">pix_fmt</div><div class="t" style="right:443.80px;top:862.77px;font-size:11.4px;line-height:13.68px;color:#ddd;font-weight:normal;">yuv420p</div><div class="w" style="left:753.40px;top:882.80px;width:275.30px;height:17.00px;border-radius:9.50px"></div><svg class="ic" style="left:758.90px;top:886.60px" width="10" height="11.4"><path d="M0 5.7 L9.6 0 L9.6 11.4Z" fill="#ddd"/></svg><svg class="ic" style="left:1015.00px;top:886.60px" width="10" height="11.4"><path d="M9.6 5.7 L0 0 L0 11.4Z" fill="#ddd"/></svg><div class="t" style="left:772.40px;top:885.81px;font-size:11.4px;line-height:13.68px;color:#999;font-weight:normal;">crf</div><div class="t" style="right:443.80px;top:885.81px;font-size:11.4px;line-height:13.68px;color:#ddd;font-weight:normal;">19</div><div class="w" style="left:753.40px;top:905.84px;width:275.30px;height:17.00px;border-radius:9.50px"></div><div class="t" style="left:767.40px;top:908.85px;font-size:11.4px;line-height:13.68px;color:#999;font-weight:normal;">save_metadata</div><div class="t" style="right:434.80px;top:908.85px;font-size:11.4px;line-height:13.68px;color:#ddd;font-weight:normal;">true</div><div class="c" style="left:1009.60px;top:908.74px;width:13.20px;height:13.20px;background:#8898aa;"></div><div class="w" style="left:753.40px;top:928.88px;width:275.30px;height:17.00px;border-radius:9.50px"></div><div class="t" style="left:767.40px;top:931.89px;font-size:11.4px;line-height:13.68px;color:#999;font-weight:normal;">pingpong</div><div class="t" style="right:434.80px;top:931.89px;font-size:11.4px;line-height:13.68px;color:#999;font-weight:normal;">false</div><div class="c" style="left:1009.60px;top:931.78px;width:13.20px;height:13.20px;background:#2a2a2a;"></div><div class="w" style="left:753.40px;top:951.92px;width:275.30px;height:17.00px;border-radius:9.50px"></div><div class="t" style="left:767.40px;top:954.93px;font-size:11.4px;line-height:13.68px;color:#999;font-weight:normal;">save_output</div><div class="t" style="right:434.80px;top:954.93px;font-size:11.4px;line-height:13.68px;color:#ddd;font-weight:normal;">true</div><div class="c" style="left:1009.60px;top:954.82px;width:13.20px;height:13.20px;background:#8898aa;"></div><svg class="ic" style="overflow:hidden;left:750.20px;top:984.80px" width="286.80" height="286.20" viewBox="0 0 1315 1315" preserveAspectRatio="none"><defs>
<radialGradient id="hgb" cx="0.45" cy="0.5" r="0.55"><stop offset="0" stop-color="#2a2a2a"/><stop offset="1" stop-color="#3c3c3c"/></radialGradient>
<linearGradient id="bgb" x1="0" y1="0" x2="1" y2="1"><stop offset="0" stop-color="#fbfbfb"/><stop offset="1" stop-color="#f0f0f0"/></linearGradient>
<linearGradient id="lsb" x1="0" y1="0" x2="1" y2="1"><stop offset="0" stop-color="#9a9a9a"/><stop offset="1" stop-color="#7a7a7a"/></linearGradient>
<linearGradient id="neb" x1="0" y1="0" x2="0" y2="1"><stop offset="0" stop-color="#858585"/><stop offset="1" stop-color="#6e6e6e"/></linearGradient>
<linearGradient id="rsb" x1="0.2" y1="0.1" x2="0.9" y2="1"><stop offset="0" stop-color="#505050"/><stop offset="1" stop-color="#050505"/></linearGradient>
</defs>
<rect width="1315" height="1315" fill="url(#bgb)"/>
<g transform="translate(600 900) scale(1.1 1.06) translate(-600 -900)">
<path d="M0.0 1315.0 C0.0 1303.8 0.0 1259.2 0.0 1248.0 C12.2 1240.5 42.5 1219.7 73.0 1203.0 C103.5 1186.3 145.0 1166.3 183.0 1148.0 C221.0 1129.7 267.7 1111.3 301.0 1093.0 C334.3 1074.7 360.2 1057.8 383.0 1038.0 C405.8 1018.2 424.3 990.7 438.0 974.0 C451.7 957.3 462.0 956.2 465.0 938.0 C468.0 919.8 463.5 884.8 456.0 865.0 C448.5 845.2 430.7 838.8 420.0 819.0 C409.3 799.2 399.7 768.7 392.0 746.0 C384.3 723.3 380.8 702.7 374.0 683.0 C367.2 663.3 357.0 644.5 351.0 628.0 C345.0 611.5 341.0 603.5 338.0 584.0 C335.0 564.5 333.0 528.5 333.0 511.0 C333.0 493.5 341.0 492.7 338.0 479.0 C335.0 465.3 321.8 446.5 315.0 429.0 C308.2 411.5 303.2 390.7 297.0 374.0 C290.8 357.3 281.5 343.0 278.0 329.0 C274.5 315.0 280.5 300.0 276.0 290.0 C271.5 280.0 255.2 272.5 251.0 269.0 C257.5 266.7 281.7 263.3 290.0 255.0 C298.3 246.7 291.5 237.2 301.0 219.0 C310.5 200.8 328.7 170.3 347.0 146.0 C365.3 121.7 383.7 93.5 411.0 73.0 C438.3 52.5 479.2 32.8 511.0 23.0 C542.8 13.2 571.5 12.5 602.0 14.0 C632.5 15.5 666.5 23.7 694.0 32.0 C721.5 40.3 748.8 54.2 767.0 64.0 C785.2 73.8 790.8 85.7 803.0 91.0 C815.2 96.3 824.8 88.3 840.0 96.0 C855.2 103.7 875.8 118.0 894.0 137.0 C912.2 156.0 934.5 185.7 949.0 210.0 C963.5 234.3 974.8 257.2 981.0 283.0 C987.2 308.8 986.7 336.2 986.0 365.0 C985.3 393.8 979.3 425.5 977.0 456.0 C974.7 486.5 974.5 524.0 972.0 548.0 C969.5 572.0 967.3 582.2 962.0 600.0 C956.7 617.8 945.2 642.8 940.0 655.0 C934.8 667.2 931.8 663.8 931.0 673.0 C930.2 682.2 938.0 697.8 935.0 710.0 C932.0 722.2 916.0 726.3 913.0 746.0 C910.0 765.7 908.0 809.7 917.0 828.0 C926.0 846.3 949.5 839.2 967.0 856.0 C984.5 872.8 1000.7 906.2 1022.0 929.0 C1043.3 951.8 1078.3 982.3 1095.0 993.0 C1111.7 1003.7 1100.7 983.8 1122.0 993.0 C1143.3 1002.2 1203.2 1034.3 1223.0 1048.0 C1242.8 1061.7 1225.7 1062.2 1241.0 1075.0 C1256.3 1087.8 1302.7 1116.7 1315.0 1125.0 C1315.0 1156.7 1315.0 1283.3 1315.0 1315.0 C1095.8 1315.0 219.2 1315.0 0.0 1315.0Z" fill="url(#hgb)"/>
<path d="M0.0 1315.0 C0.0 1303.8 0.0 1259.2 0.0 1248.0 C12.2 1240.5 42.5 1219.7 73.0 1203.0 C103.5 1186.3 145.0 1166.3 183.0 1148.0 C221.0 1129.7 267.7 1111.3 301.0 1093.0 C334.3 1074.7 360.2 1057.8 383.0 1038.0 C405.8 1018.2 424.3 989.5 438.0 974.0 C451.7 958.5 460.5 949.8 465.0 945.0 C469.7 965.2 491.3 1027.7 493.0 1066.0 C494.7 1104.3 479.7 1133.5 475.0 1175.0 C470.3 1216.5 466.7 1291.7 465.0 1315.0 C387.5 1315.0 77.5 1315.0 0.0 1315.0Z" fill="url(#lsb)"/>
<path d="M465.0 945.0 C474.2 948.8 498.7 962.5 520.0 968.0 C541.3 973.5 566.3 979.7 593.0 978.0 C619.7 976.3 652.2 969.7 680.0 958.0 C707.8 946.3 731.7 927.7 760.0 908.0 C788.3 888.3 823.8 859.7 850.0 840.0 C876.2 820.3 905.8 798.3 917.0 790.0 C918.3 800.0 922.0 835.0 925.0 850.0 C928.0 865.0 933.3 875.0 935.0 880.0 C919.2 897.2 880.2 946.0 840.0 983.0 C799.8 1020.0 727.5 1073.0 694.0 1102.0 C660.5 1131.0 649.7 1137.2 639.0 1157.0 C628.3 1176.8 645.2 1194.7 630.0 1221.0 C614.8 1247.3 561.7 1299.3 548.0 1315.0 C534.2 1315.0 478.8 1315.0 465.0 1315.0 C466.7 1291.7 470.3 1216.5 475.0 1175.0 C479.7 1133.5 494.7 1104.3 493.0 1066.0 C491.3 1027.7 469.7 965.2 465.0 945.0Z" fill="url(#neb)"/>
<path d="M935.0 880.0 C940.3 876.0 952.5 847.8 967.0 856.0 C981.5 864.2 1000.7 906.2 1022.0 929.0 C1043.3 951.8 1078.3 982.3 1095.0 993.0 C1111.7 1003.7 1100.7 983.8 1122.0 993.0 C1143.3 1002.2 1203.2 1034.3 1223.0 1048.0 C1242.8 1061.7 1225.7 1062.2 1241.0 1075.0 C1256.3 1087.8 1302.7 1116.7 1315.0 1125.0 C1315.0 1156.7 1315.0 1283.3 1315.0 1315.0 C1187.2 1315.0 675.8 1315.0 548.0 1315.0 C561.7 1299.3 614.8 1247.3 630.0 1221.0 C645.2 1194.7 628.3 1176.8 639.0 1157.0 C649.7 1137.2 660.5 1131.0 694.0 1102.0 C727.5 1073.0 799.8 1020.0 840.0 983.0 C880.2 946.0 919.2 897.2 935.0 880.0Z" fill="url(#rsb)"/>
</g></svg><div class="r" style="left:867.80px;top:657.00px;width:177.20px;height:18.00px;background:#111e11;border-radius:5px;"></div><div class="t" style="left:873.00px;top:660.39px;font-size:11.0px;line-height:13.20px;color:#fff;font-weight:bold;">#288 ComfyUI-VideoHelperSuite</div>
<div class="node" style="left:1086.00px;top:683.80px;width:307.00px;height:602.40px;background:#353535;"></div><div class="r" style="left:1086.00px;top:683.80px;width:307.00px;height:28.50px;background:#333333;border-radius:7.6px 7.6px 0 0;border-bottom:1px solid rgba(0,0,0,0.18)"></div><div class="c" style="left:1095.40px;top:693.15px;width:9.80px;height:9.80px;background:#6e6e6e;"></div><div class="t" style="left:1114.50px;top:691.26px;font-size:13.3px;line-height:15.96px;color:#999;font-weight:normal;">Video Combine</div><svg class="ic" style="left:1212.00px;top:691.05px" width="15" height="14" viewBox="0 0 15 14"><circle cx="3.5" cy="3.2" r="2.6" fill="#7b68c8"/><circle cx="8.6" cy="3.2" r="2.6" fill="#7b68c8"/><rect x="1" y="5.6" width="10" height="7" rx="1" fill="#7b68c8"/><path d="M11 8 L14.5 6 L14.5 12.5 L11 10.5Z" fill="#7b68c8"/><rect x="2.5" y="8.5" width="6" height="1.6" fill="#e8e0f0"/><rect x="3.2" y="8.5" width="1" height="1.6" fill="#d44"/></svg><div class="c vh" style="left:1228.30px;top:693.15px;width:9.8px;height:9.8px;background:#9c9c9c;"><span>V</span></div><div class="c vh" style="left:1240.00px;top:693.15px;width:9.8px;height:9.8px;background:#9c9c9c;"><span>H</span></div><div class="c vh" style="left:1251.70px;top:693.15px;width:9.8px;height:9.8px;background:#9c9c9c;"><span>S</span></div><div class="c" style="left:1091.40px;top:721.70px;width:8.00px;height:8.00px;background:#64b5f6;"></div><div class="t" style="left:1104.40px;top:720.21px;font-size:11.4px;line-height:13.68px;color:#999;font-weight:normal;">images</div><div class="c" style="left:1091.40px;top:740.80px;width:8.00px;height:8.00px;background:#7f7c8f;"></div><div class="t" style="left:1104.40px;top:739.31px;font-size:11.4px;line-height:13.68px;color:#999;font-weight:normal;">audio</div><div class="c" style="left:1091.40px;top:759.90px;width:8.00px;height:8.00px;background:#7f7c8f;"></div><div class="t" style="left:1104.40px;top:758.41px;font-size:11.4px;line-height:13.68px;color:#999;font-weight:normal;">meta_batch</div><div class="c" style="left:1379.40px;top:721.80px;width:7.80px;height:7.80px;background:#7f7c8f;box-shadow:0 0 0 1px rgba(0,0,0,0.6);"></div><div class="t" style="right:67.80px;top:720.21px;font-size:11.4px;line-height:13.68px;color:#999;font-weight:normal;">Filenames</div><div class="w" style="left:1100.20px;top:775.50px;width:275.30px;height:17.00px;border-radius:9.50px"></div><svg class="ic" style="left:1105.70px;top:779.30px" width="10" height="11.4"><path d="M0 5.7 L9.6 0 L9.6 11.4Z" fill="#ddd"/></svg><svg class="ic" style="left:1361.80px;top:779.30px" width="10" height="11.4"><path d="M9.6 5.7 L0 0 L0 11.4Z" fill="#ddd"/></svg><div class="t" style="left:1119.20px;top:778.51px;font-size:11.4px;line-height:13.68px;color:#999;font-weight:normal;">frame_rate</div><div class="t" style="right:97.00px;top:778.51px;font-size:11.4px;line-height:13.68px;color:#ddd;font-weight:normal;">8</div><div class="w" style="left:1100.20px;top:798.54px;width:275.30px;height:17.00px;border-radius:9.50px"></div><svg class="ic" style="left:1105.70px;top:802.34px" width="10" height="11.4"><path d="M0 5.7 L9.6 0 L9.6 11.4Z" fill="#ddd"/></svg><svg class="ic" style="left:1361.80px;top:802.34px" width="10" height="11.4"><path d="M9.6 5.7 L0 0 L0 11.4Z" fill="#ddd"/></svg><div class="t" style="left:1119.20px;top:801.55px;font-size:11.4px;line-height:13.68px;color:#999;font-weight:normal;">loop_count</div><div class="t" style="right:97.00px;top:801.55px;font-size:11.4px;line-height:13.68px;color:#ddd;font-weight:normal;">0</div><div class="w" style="left:1100.20px;top:821.58px;width:275.30px;height:17.00px;border-radius:9.50px"></div><div class="t" style="left:1114.20px;top:824.59px;font-size:11.4px;line-height:13.68px;color:#999;font-weight:normal;">filename_prefix</div><div class="t" style="right:77.00px;top:824.59px;font-size:11.4px;line-height:13.68px;color:#ddd;font-weight:normal;">AnimateDiff</div><div class="w" style="left:1100.20px;top:844.62px;width:275.30px;height:17.00px;border-radius:9.50px"></div><svg class="ic" style="left:1105.70px;top:848.42px" width="10" height="11.4"><path d="M0 5.7 L9.6 0 L9.6 11.4Z" fill="#ddd"/></svg><svg class="ic" style="left:1361.80px;top:848.42px" width="10" height="11.4"><path d="M9.6 5.7 L0 0 L0 11.4Z" fill="#ddd"/></svg><div class="t" style="left:1119.20px;top:847.63px;font-size:11.4px;line-height:13.68px;color:#999;font-weight:normal;">format</div><div class="t" style="right:97.00px;top:847.63px;font-size:11.4px;line-height:13.68px;color:#ddd;font-weight:normal;">video/h264-mp4</div><div class="w" style="left:1100.20px;top:867.66px;width:275.30px;height:17.00px;border-radius:9.50px"></div><svg class="ic" style="left:1105.70px;top:871.46px" width="10" height="11.4"><path d="M0 5.7 L9.6 0 L9.6 11.4Z" fill="#ddd"/></svg><svg class="ic" style="left:1361.80px;top:871.46px" width="10" height="11.4"><path d="M9.6 5.7 L0 0 L0 11.4Z" fill="#ddd"/></svg><div class="t" style="left:1119.20px;top:870.67px;font-size:11.4px;line-height:13.68px;color:#999;font-weight:normal;">pix_fmt</div><div class="t" style="right:97.00px;top:870.67px;font-size:11.4px;line-height:13.68px;color:#ddd;font-weight:normal;">yuv420p</div><div class="w" style="left:1100.20px;top:890.70px;width:275.30px;height:17.00px;border-radius:9.50px"></div><svg class="ic" style="left:1105.70px;top:894.50px" width="10" height="11.4"><path d="M0 5.7 L9.6 0 L9.6 11.4Z" fill="#ddd"/></svg><svg class="ic" style="left:1361.80px;top:894.50px" width="10" height="11.4"><path d="M9.6 5.7 L0 0 L0 11.4Z" fill="#ddd"/></svg><div class="t" style="left:1119.20px;top:893.71px;font-size:11.4px;line-height:13.68px;color:#999;font-weight:normal;">crf</div><div class="t" style="right:97.00px;top:893.71px;font-size:11.4px;line-height:13.68px;color:#ddd;font-weight:normal;">19</div><div class="w" style="left:1100.20px;top:913.74px;width:275.30px;height:17.00px;border-radius:9.50px"></div><div class="t" style="left:1114.20px;top:916.75px;font-size:11.4px;line-height:13.68px;color:#999;font-weight:normal;">save_metadata</div><div class="t" style="right:88.00px;top:916.75px;font-size:11.4px;line-height:13.68px;color:#ddd;font-weight:normal;">true</div><div class="c" style="left:1356.40px;top:916.64px;width:13.20px;height:13.20px;background:#8898aa;"></div><div class="w" style="left:1100.20px;top:936.78px;width:275.30px;height:17.00px;border-radius:9.50px"></div><div class="t" style="left:1114.20px;top:939.79px;font-size:11.4px;line-height:13.68px;color:#999;font-weight:normal;">pingpong</div><div class="t" style="right:88.00px;top:939.79px;font-size:11.4px;line-height:13.68px;color:#999;font-weight:normal;">false</div><div class="c" style="left:1356.40px;top:939.68px;width:13.20px;height:13.20px;background:#2a2a2a;"></div><div class="w" style="left:1100.20px;top:959.82px;width:275.30px;height:17.00px;border-radius:9.50px"></div><div class="t" style="left:1114.20px;top:962.83px;font-size:11.4px;line-height:13.68px;color:#999;font-weight:normal;">save_output</div><div class="t" style="right:88.00px;top:962.83px;font-size:11.4px;line-height:13.68px;color:#ddd;font-weight:normal;">true</div><div class="c" style="left:1356.40px;top:962.72px;width:13.20px;height:13.20px;background:#8898aa;"></div><svg class="ic" style="overflow:hidden;left:1095.90px;top:991.60px" width="287.30" height="287.60" viewBox="0 0 1315 1315" preserveAspectRatio="none"><defs>
<radialGradient id="hgc" cx="0.45" cy="0.5" r="0.55"><stop offset="0" stop-color="#5f5f5f"/><stop offset="1" stop-color="#6f6f6f"/></radialGradient>
<linearGradient id="bgc" x1="0" y1="0" x2="1" y2="1"><stop offset="0" stop-color="#fafafa"/><stop offset="1" stop-color="#f0f0f0"/></linearGradient>
<linearGradient id="lsc" x1="0" y1="0" x2="1" y2="1"><stop offset="0" stop-color="#939393"/><stop offset="1" stop-color="#808080"/></linearGradient>
<linearGradient id="nec" x1="0" y1="0" x2="0" y2="1"><stop offset="0" stop-color="#8e8e8e"/><stop offset="1" stop-color="#7c7c7c"/></linearGradient>
<linearGradient id="rsc" x1="0.2" y1="0.1" x2="0.9" y2="1"><stop offset="0" stop-color="#6e6e6e"/><stop offset="1" stop-color="#000000"/></linearGradient>
</defs>
<rect width="1315" height="1315" fill="url(#bgc)"/>
<g transform="translate(600 900) scale(1.1 1.06) translate(-600 -900)">
<path d="M0.0 1315.0 C0.0 1303.8 0.0 1259.2 0.0 1248.0 C12.2 1240.5 42.5 1219.7 73.0 1203.0 C103.5 1186.3 145.0 1166.3 183.0 1148.0 C221.0 1129.7 267.7 1111.3 301.0 1093.0 C334.3 1074.7 360.2 1057.8 383.0 1038.0 C405.8 1018.2 424.3 990.7 438.0 974.0 C451.7 957.3 462.0 956.2 465.0 938.0 C468.0 919.8 463.5 884.8 456.0 865.0 C448.5 845.2 430.7 838.8 420.0 819.0 C409.3 799.2 399.7 768.7 392.0 746.0 C384.3 723.3 380.8 702.7 374.0 683.0 C367.2 663.3 357.0 644.5 351.0 628.0 C345.0 611.5 341.0 603.5 338.0 584.0 C335.0 564.5 333.0 528.5 333.0 511.0 C333.0 493.5 341.0 492.7 338.0 479.0 C335.0 465.3 321.8 446.5 315.0 429.0 C308.2 411.5 303.2 390.7 297.0 374.0 C290.8 357.3 281.5 343.0 278.0 329.0 C274.5 315.0 280.5 300.0 276.0 290.0 C271.5 280.0 255.2 272.5 251.0 269.0 C257.5 266.7 281.7 263.3 290.0 255.0 C298.3 246.7 291.5 237.2 301.0 219.0 C310.5 200.8 328.7 170.3 347.0 146.0 C365.3 121.7 383.7 93.5 411.0 73.0 C438.3 52.5 479.2 32.8 511.0 23.0 C542.8 13.2 571.5 12.5 602.0 14.0 C632.5 15.5 666.5 23.7 694.0 32.0 C721.5 40.3 748.8 54.2 767.0 64.0 C785.2 73.8 790.8 85.7 803.0 91.0 C815.2 96.3 824.8 88.3 840.0 96.0 C855.2 103.7 875.8 118.0 894.0 137.0 C912.2 156.0 934.5 185.7 949.0 210.0 C963.5 234.3 974.8 257.2 981.0 283.0 C987.2 308.8 986.7 336.2 986.0 365.0 C985.3 393.8 979.3 425.5 977.0 456.0 C974.7 486.5 974.5 524.0 972.0 548.0 C969.5 572.0 967.3 582.2 962.0 600.0 C956.7 617.8 945.2 642.8 940.0 655.0 C934.8 667.2 931.8 663.8 931.0 673.0 C930.2 682.2 938.0 697.8 935.0 710.0 C932.0 722.2 916.0 726.3 913.0 746.0 C910.0 765.7 908.0 809.7 917.0 828.0 C926.0 846.3 949.5 839.2 967.0 856.0 C984.5 872.8 1000.7 906.2 1022.0 929.0 C1043.3 951.8 1078.3 982.3 1095.0 993.0 C1111.7 1003.7 1100.7 983.8 1122.0 993.0 C1143.3 1002.2 1203.2 1034.3 1223.0 1048.0 C1242.8 1061.7 1225.7 1062.2 1241.0 1075.0 C1256.3 1087.8 1302.7 1116.7 1315.0 1125.0 C1315.0 1156.7 1315.0 1283.3 1315.0 1315.0 C1095.8 1315.0 219.2 1315.0 0.0 1315.0Z" fill="url(#hgc)"/>
<path d="M0.0 1315.0 C0.0 1303.8 0.0 1259.2 0.0 1248.0 C12.2 1240.5 42.5 1219.7 73.0 1203.0 C103.5 1186.3 145.0 1166.3 183.0 1148.0 C221.0 1129.7 267.7 1111.3 301.0 1093.0 C334.3 1074.7 360.2 1057.8 383.0 1038.0 C405.8 1018.2 424.3 989.5 438.0 974.0 C451.7 958.5 460.5 949.8 465.0 945.0 C469.7 965.2 491.3 1027.7 493.0 1066.0 C494.7 1104.3 479.7 1133.5 475.0 1175.0 C470.3 1216.5 466.7 1291.7 465.0 1315.0 C387.5 1315.0 77.5 1315.0 0.0 1315.0Z" fill="url(#lsc)"/>
<path d="M465.0 945.0 C474.2 948.8 498.7 962.5 520.0 968.0 C541.3 973.5 566.3 979.7 593.0 978.0 C619.7 976.3 652.2 969.7 680.0 958.0 C707.8 946.3 731.7 927.7 760.0 908.0 C788.3 888.3 823.8 859.7 850.0 840.0 C876.2 820.3 905.8 798.3 917.0 790.0 C918.3 800.0 922.0 835.0 925.0 850.0 C928.0 865.0 933.3 875.0 935.0 880.0 C919.2 897.2 880.2 946.0 840.0 983.0 C799.8 1020.0 727.5 1073.0 694.0 1102.0 C660.5 1131.0 649.7 1137.2 639.0 1157.0 C628.3 1176.8 645.2 1194.7 630.0 1221.0 C614.8 1247.3 561.7 1299.3 548.0 1315.0 C534.2 1315.0 478.8 1315.0 465.0 1315.0 C466.7 1291.7 470.3 1216.5 475.0 1175.0 C479.7 1133.5 494.7 1104.3 493.0 1066.0 C491.3 1027.7 469.7 965.2 465.0 945.0Z" fill="url(#nec)"/>
<path d="M935.0 880.0 C940.3 876.0 952.5 847.8 967.0 856.0 C981.5 864.2 1000.7 906.2 1022.0 929.0 C1043.3 951.8 1078.3 982.3 1095.0 993.0 C1111.7 1003.7 1100.7 983.8 1122.0 993.0 C1143.3 1002.2 1203.2 1034.3 1223.0 1048.0 C1242.8 1061.7 1225.7 1062.2 1241.0 1075.0 C1256.3 1087.8 1302.7 1116.7 1315.0 1125.0 C1315.0 1156.7 1315.0 1283.3 1315.0 1315.0 C1187.2 1315.0 675.8 1315.0 548.0 1315.0 C561.7 1299.3 614.8 1247.3 630.0 1221.0 C645.2 1194.7 628.3 1176.8 639.0 1157.0 C649.7 1137.2 660.5 1131.0 694.0 1102.0 C727.5 1073.0 799.8 1020.0 840.0 983.0 C880.2 946.0 919.2 897.2 935.0 880.0Z" fill="url(#rsc)"/>
</g></svg><div class="r" style="left:1214.60px;top:664.60px;width:177.10px;height:18.40px;background:#111e11;border-radius:5px;"></div><div class="t" style="left:1219.80px;top:668.19px;font-size:11.0px;line-height:13.20px;color:#fff;font-weight:bold;">#290 ComfyUI-VideoHelperSuite</div>
<div class="t" style="right:1189.00px;top:193.41px;font-size:11.4px;line-height:13.68px;color:#ddd;font-weight:normal;">(Empty,_alone,_seed3322483005994943 (1).mp4</div>
<div class="r" style="left:1303.60px;top:312.20px;width:72.50px;height:24.50px;background:#335533;border-radius:8px;box-shadow:1px 2px 3px rgba(0,0,0,0.45)"></div>
<div class="c" style="left:1308.90px;top:321.80px;width:8.40px;height:8.40px;background:#6ef06e;"></div>
<div class="t" style="left:1322.80px;top:319.60px;font-size:11.2px;line-height:13.44px;color:#a2a2a2;font-weight:normal;">Raw Video</div>
<div class="c" style="left:1362.90px;top:322.10px;width:7.80px;height:7.80px;background:#64b5f6;box-shadow:0 0 0 1px rgba(0,0,0,0.8);"></div></div></body></html>
